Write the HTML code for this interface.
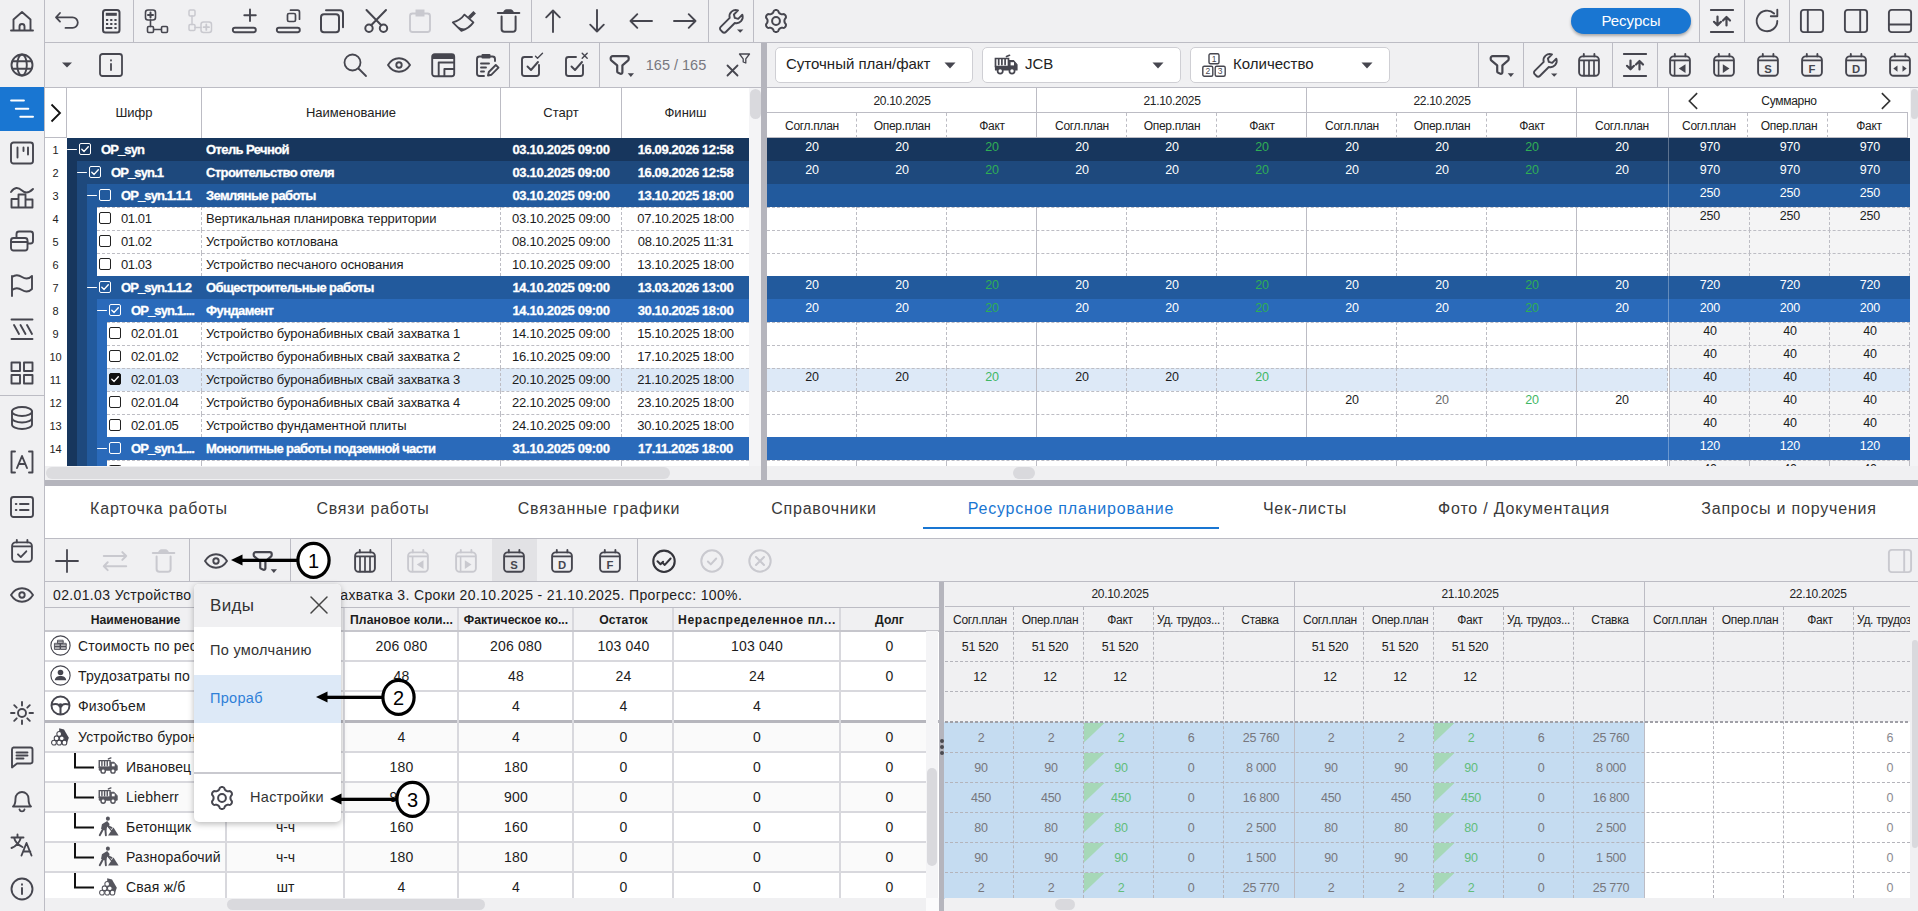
<!DOCTYPE html>
<html lang="ru"><head><meta charset="utf-8"><title>Ресурсное планирование</title>
<style>
*{box-sizing:border-box}
html,body{margin:0;padding:0}
body{width:1918px;height:911px;overflow:hidden;background:#f0f0f2;font-family:"Liberation Sans",sans-serif;position:relative;color:#1c1c1c;font-size:13px}
body div,body svg.ic{position:absolute}
.ic{fill:none;stroke:currentColor;stroke-width:1.9;stroke-linecap:round;stroke-linejoin:round;overflow:visible}
.t{white-space:nowrap;overflow:hidden;text-align:center}
.l{white-space:nowrap;overflow:hidden;text-align:left}
.b{font-weight:bold;color:#fff;letter-spacing:-0.6px;-webkit-text-stroke:0.3px #fff}
.g{color:#2fae55}
</style></head><body>

<div style="left:44px;top:0px;width:1px;height:911px;background:#bcbcc4"></div>
<div style="left:0px;top:87px;width:44px;height:44px;background:#1976d2"></div>
<svg class="ic" style="left:10.0px;top:9.0px;color:#46464f;" width="24" height="24" viewBox="0 0 24 24"><path d="M1 21.5h22M3.5 21V10.5L12 3l8.500 7.5V21M9.500 21.500v-4a2.500 2.500 0 0 1 5 0v4"/></svg>
<svg class="ic" style="left:10.0px;top:53.0px;color:#46464f;" width="24" height="24" viewBox="0 0 24 24"><circle cx="12" cy="12" r="10.500"/><ellipse cx="12" cy="12" rx="4.800" ry="10.500"/><path d="M2.500 8.300h19M2.500 15.700h19"/></svg>
<svg class="ic" style="left:10.0px;top:97.0px;color:#fff;" width="24" height="24" viewBox="0 0 24 24"><path d="M1.100 3.600h12.800M5.800 11.700h12.500M10.300 19.800h12.700" stroke-width="2"/></svg>
<svg class="ic" style="left:10.0px;top:141.0px;color:#46464f;" width="24" height="24" viewBox="0 0 24 24"><rect x="1" y="1.500" width="22" height="21" rx="2.500"/><path d="M7.500 6.500v10M13.500 6.500v3.500M18 6.500v7"/></svg>
<svg class="ic" style="left:10.0px;top:185.0px;color:#46464f;" width="24" height="24" viewBox="0 0 24 24"><path d="M1 7c3.500-5 7-5 11-1.500s7.500 2 11-1.500M1.500 22.500v-8.500h7v8.500M8.500 22.500V9.500h7v13M15.500 22.500v-8h7v8zM1.500 22.500h21"/></svg>
<svg class="ic" style="left:10.0px;top:229.0px;color:#46464f;" width="24" height="24" viewBox="0 0 24 24"><rect x="6.500" y="2.500" width="16.500" height="12" rx="2.500"/><rect x="1" y="9" width="16.500" height="12.500" rx="2.500" fill="#f0f0f2"/><path d="M1 13h16.500"/></svg>
<svg class="ic" style="left:10.0px;top:273.0px;color:#46464f;" width="24" height="24" viewBox="0 0 24 24"><path d="M2 23V3M2 4c4-3 7-2 10 0s6.500 2.500 10-1v13c-3.500 3.500-7 3-10 1s-6-3-10 0"/></svg>
<svg class="ic" style="left:10.0px;top:317.0px;color:#46464f;" width="24" height="24" viewBox="0 0 24 24"><path d="M1.500 2.500h21M1.500 22h21M4 8l5 9M10.500 8l5 9M17 8l5 9"/></svg>
<svg class="ic" style="left:10.0px;top:361.0px;color:#46464f;" width="24" height="24" viewBox="0 0 24 24"><rect x="1.500" y="1.500" width="8.500" height="8.500"/><rect x="14" y="1.500" width="8.500" height="8.500"/><rect x="1.500" y="14" width="8.500" height="8.500"/><rect x="14" y="14" width="8.500" height="8.500"/></svg>
<svg class="ic" style="left:10.0px;top:406.0px;color:#46464f;" width="24" height="24" viewBox="0 0 24 24"><ellipse cx="12" cy="5.500" rx="10" ry="4.500"/><path d="M2 5.500v13c0 2.500 4.500 4.500 10 4.500s10-2 10-4.500v-13M2 12c0 2.500 4.500 4.500 10 4.500s10-2 10-4.500"/></svg>
<svg class="ic" style="left:10.0px;top:450.0px;color:#46464f;" width="24" height="24" viewBox="0 0 24 24"><path d="M5 1.500H1.500v21H5M19 1.500h3.500v21H19M7 18l5-12 5 12M8.800 14h6.400"/></svg>
<svg class="ic" style="left:10.0px;top:495.0px;color:#46464f;" width="24" height="24" viewBox="0 0 24 24"><rect x="1" y="2" width="22" height="20" rx="2.500"/><path d="M10 9h8.500M10 15h8.500M5.800 9h.6M5.800 15h.6" stroke-width="2"/></svg>
<svg class="ic" style="left:10.0px;top:539.0px;color:#46464f;" width="24" height="24" viewBox="0 0 24 24"><rect x="2.100" y="3.400" width="19.800" height="19.400" rx="3.600"/><path d="M6.800 0.900v2.500M17.400 0.900v2.500"/><path d="M2.500 7.400h19" stroke-width="1.800" stroke-linecap="butt"/><path d="M8 15.300l2.800 2.800 5.500-5.800"/></svg>
<svg class="ic" style="left:10.0px;top:583.0px;color:#46464f;" width="24" height="24" viewBox="0 0 24 24"><path d="M1 12c3-4.800 7-6.700 11-6.700s8 1.900 11 6.700c-3 4.800-7 6.700-11 6.700s-8-1.900-11-6.700z"/><circle cx="12" cy="12" r="2.700"/></svg>
<svg class="ic" style="left:10.0px;top:701.0px;color:#46464f;" width="24" height="24" viewBox="0 0 24 24"><circle cx="12" cy="12" r="4"/><path d="M12 1v3.500M12 19.500V23M1 12h3.500M19.500 12H23M4.200 4.200l2.500 2.500M17.300 17.300l2.500 2.500M4.200 19.800l2.500-2.500M17.300 6.700l2.500-2.500"/></svg>
<svg class="ic" style="left:10.0px;top:745.0px;color:#46464f;" width="24" height="24" viewBox="0 0 24 24"><path d="M3.500 2.500h17a2 2 0 0 1 2 2v12a2 2 0 0 1-2 2H7l-5 4v-18a2 2 0 0 1 1.500-2zM6.500 7.500h11M6.500 10.500h11M6.500 13.500h7"/></svg>
<svg class="ic" style="left:10.0px;top:789.0px;color:#46464f;" width="24" height="24" viewBox="0 0 24 24"><path d="M3 17.500c2-1.500 2.500-4 2.500-8a6.500 6.500 0 0 1 13 0c0 4 .5 6.500 2.500 8zM9.500 20.500a2.600 2.600 0 0 0 5 0"/></svg>
<svg class="ic" style="left:10.0px;top:833.0px;color:#46464f;" width="24" height="24" viewBox="0 0 24 24"><path d="M1.500 4.500h12M7.500 1.500v3M11 4.500c-1.500 5-4.500 8.500-9.500 10.500M4 4.500c1 4 4 7.500 8.500 9.500M11.500 22.500l5-12.500 5 12.500M13.300 18.500h7"/></svg>
<svg class="ic" style="left:10.0px;top:877.0px;color:#46464f;" width="24" height="24" viewBox="0 0 24 24"><circle cx="12" cy="12" r="10.500"/><path d="M12 11v6M12 7.300v.4"/></svg>
<div style="left:0px;top:395px;width:44px;height:1px;background:#bcbcc4"></div>
<div style="left:45px;top:42px;width:1873px;height:1px;background:#bcbcc4"></div>
<svg class="ic" style="left:55.0px;top:9.0px;color:#46464f;" width="24" height="24" viewBox="0 0 24 24"><path d="M5 4L1 8.300l4 4.300M1.500 8.300H17.500a5.300 5.300 0 0 1 0 10.600H10.500" stroke-width="1.800"/></svg>
<svg class="ic" style="left:99.0px;top:9.0px;color:#46464f;" width="24" height="24" viewBox="0 0 24 24"><rect x="4" y="1" width="16.500" height="22.500" rx="2.500" stroke-width="2"/><rect x="6.800" y="3.800" width="11" height="3" fill="currentColor" stroke="none"/><path d="M8 11h.2M12.200 11h.2M16.400 11h.2M8 15h.2M12.200 15h.2M16.400 15h.2M7.800 19h4.500M16.400 19h.2" stroke-width="2" stroke-linecap="square"/></svg>
<svg class="ic" style="left:144.0px;top:9.0px;color:#46464f;" width="24" height="24" viewBox="0 0 24 24"><rect x="1.500" y="1" width="10" height="10" rx="2.500" stroke-width="1.600"/><path d="M4 6h5M6.500 3.500v5" stroke-width="2"/><path d="M6.500 11v6.500M9.800 20.500h7.500" stroke-width="1.600"/><rect x="3.500" y="17.500" width="6" height="6" rx="1.200" stroke-width="1.600"/><rect x="17.500" y="17.500" width="6" height="6" rx="1.200" stroke-width="1.600"/></svg>
<svg class="ic" style="left:188.0px;top:9.0px;color:#c9c9cf;" width="24" height="24" viewBox="0 0 24 24"><rect x="1" y="1" width="6" height="6" rx="1.200" stroke-width="1.500"/><path d="M4 7v8.500M7 18.500h6" stroke-width="1.500"/><rect x="1" y="15.500" width="6" height="6" rx="1.200" stroke-width="1.500"/><rect x="13" y="13" width="10.500" height="10.500" rx="2.500" stroke-width="1.500"/><path d="M15.600 18.200h5.400M18.300 15.500v5.400" stroke-width="1.800"/></svg>
<svg class="ic" style="left:232.0px;top:9.0px;color:#46464f;" width="24" height="24" viewBox="0 0 24 24"><rect x="0.800" y="18.800" width="23" height="4.500" rx="2.200" stroke-width="1.900"/><path d="M18 0.500v11.500M12.300 6.200h11.500" stroke-width="1.900"/></svg>
<svg class="ic" style="left:276.0px;top:9.0px;color:#46464f;" width="24" height="24" viewBox="0 0 24 24"><rect x="0.800" y="18.800" width="23" height="4.500" rx="2.200" stroke-width="1.900"/><rect x="11.500" y="4.500" width="8" height="8" rx="1.500" stroke-width="1.700"/><path d="M14.500 1.200h7a2 2 0 0 1 2 2v7" stroke-width="1.700"/></svg>
<svg class="ic" style="left:320.0px;top:9.0px;color:#46464f;" width="24" height="24" viewBox="0 0 24 24"><rect x="1" y="5.300" width="18" height="18" rx="3" stroke-width="2"/><path d="M6 1.300h14a3 3 0 0 1 3 3v14" stroke-width="2"/></svg>
<svg class="ic" style="left:364.0px;top:9.0px;color:#46464f;" width="24" height="24" viewBox="0 0 24 24"><circle cx="5" cy="19.200" r="3.700" stroke-width="2"/><circle cx="19.500" cy="19.200" r="3.700" stroke-width="2"/><path d="M7.200 16.300L22 1M17.300 16.300L2.500 1" stroke-width="2"/></svg>
<svg class="ic" style="left:408.0px;top:9.0px;color:#c9c9cf;" width="24" height="24" viewBox="0 0 24 24"><rect x="2" y="4.500" width="20" height="18.500" rx="2.500"/><rect x="7.500" y="0.500" width="9" height="7" fill="currentColor" stroke="none"/></svg>
<svg class="ic" style="left:452.0px;top:9.0px;color:#46464f;" width="24" height="24" viewBox="0 0 24 24"><path d="M12.500 5.600L21.400 13.400Q17 19.500 9.400 21.800L0.800 13.400Q8.500 11.500 12.500 5.600z" stroke-width="1.800"/><path d="M4.300 16.800L9.400 21.800L13.500 19.800Q8.500 19.500 4.300 16.800z" fill="currentColor" stroke="none"/><path d="M22.700 3.300L17.200 8.700" stroke-width="3.600" stroke-linecap="butt"/></svg>
<svg class="ic" style="left:496.0px;top:9.0px;color:#46464f;" width="24" height="24" viewBox="0 0 24 24"><path d="M1.800 3.900h21.500" stroke-width="2"/><path d="M7 3.800c.5-2.300 2-3.600 3.500-3.600h4c1.500 0 3 1.300 3.500 3.600z" fill="currentColor" stroke="none"/><path d="M5.600 7.500v12.500a2.800 2.800 0 0 0 2.800 2.800h8.400a2.800 2.800 0 0 0 2.800-2.800V7.500" stroke-width="2"/></svg>
<svg class="ic" style="left:541.0px;top:9.0px;color:#46464f;" width="24" height="24" viewBox="0 0 24 24"><path d="M12 23V1.500M5.200 8.300L12 1.500l6.800 6.800" stroke-width="1.900"/></svg>
<svg class="ic" style="left:585.0px;top:9.0px;color:#46464f;" width="24" height="24" viewBox="0 0 24 24"><path d="M12 1v21.500M5.200 15.700l6.800 6.800 6.800-6.800" stroke-width="1.900"/></svg>
<svg class="ic" style="left:629.0px;top:9.0px;color:#46464f;" width="24" height="24" viewBox="0 0 24 24"><path d="M23 12H1.500M8.300 5.200L1.500 12l6.800 6.800" stroke-width="1.900"/></svg>
<svg class="ic" style="left:673.0px;top:9.0px;color:#46464f;" width="24" height="24" viewBox="0 0 24 24"><path d="M1 12h21.500M15.700 5.200l6.800 6.800-6.800 6.800" stroke-width="1.900"/></svg>
<svg class="ic" style="left:719.0px;top:9.0px;color:#46464f;" width="24" height="24" viewBox="0 0 24 24"><path d="M2.200 22a2.300 2.300 0 0 1 0-3.300L11.200 9.700a6.300 6.300 0 0 1 8.300-7.500l-4.100 4.100.9 3.400 3.400.9 4.100-4.100a6.300 6.300 0 0 1-7.500 8.300l-9 9a2.300 2.300 0 0 1-3.300 0z" stroke-width="1.900" transform="translate(-0.500 -0.800)"/><path d="M18 20.500h6.400l-3.200 3.200z" fill="currentColor" stroke="none"/></svg>
<svg class="ic" style="left:764.0px;top:9.0px;color:#46464f;" width="24" height="24" viewBox="0 0 24 24"><path d="M20.40 12.00 L20.44 11.45 L20.55 10.87 L20.76 10.26 L21.37 9.49 L21.91 8.64 L21.95 7.88 L21.82 7.16 L21.53 6.50 L21.10 5.92 L20.55 5.44 L19.87 5.10 L18.86 5.14 L17.89 5.28 L17.25 5.16 L16.70 4.97 L16.20 4.73 L15.74 4.42 L15.30 4.03 L14.87 3.54 L14.51 2.63 L14.04 1.73 L13.41 1.32 L12.72 1.08 L12.00 1.00 L11.28 1.08 L10.59 1.32 L9.96 1.73 L9.49 2.63 L9.13 3.54 L8.70 4.03 L8.26 4.42 L7.80 4.73 L7.30 4.97 L6.75 5.16 L6.11 5.28 L5.14 5.14 L4.13 5.10 L3.45 5.44 L2.90 5.92 L2.47 6.50 L2.18 7.16 L2.05 7.88 L2.09 8.64 L2.63 9.49 L3.24 10.26 L3.45 10.87 L3.56 11.45 L3.60 12.00 L3.56 12.55 L3.45 13.13 L3.24 13.74 L2.63 14.51 L2.09 15.36 L2.05 16.12 L2.18 16.84 L2.47 17.50 L2.90 18.08 L3.45 18.56 L4.13 18.90 L5.14 18.86 L6.11 18.72 L6.75 18.84 L7.30 19.03 L7.80 19.27 L8.26 19.58 L8.70 19.97 L9.13 20.46 L9.49 21.37 L9.96 22.27 L10.59 22.68 L11.28 22.92 L12.00 23.00 L12.72 22.92 L13.41 22.68 L14.04 22.27 L14.51 21.37 L14.87 20.46 L15.30 19.97 L15.74 19.58 L16.20 19.27 L16.70 19.03 L17.25 18.84 L17.89 18.72 L18.86 18.86 L19.87 18.90 L20.55 18.56 L21.10 18.08 L21.53 17.50 L21.82 16.84 L21.95 16.12 L21.91 15.36 L21.37 14.51 L20.76 13.74 L20.55 13.13 L20.44 12.55z" stroke-width="2"/><circle cx="12" cy="12" r="3.900" stroke-width="2"/></svg>
<svg class="ic" style="left:1710.0px;top:9.0px;color:#46464f;" width="24" height="24" viewBox="0 0 24 24"><path d="M0.800 1h22.400M0.800 23h22.400" stroke-width="1.800"/><path d="M7.500 7.500v8.500M4 12.800l3.500 3.500 3.500-3.500M16.500 16.500V8M13 11.500L16.500 8l3.500 3.500" stroke-width="2.200"/></svg>
<svg class="ic" style="left:1755.0px;top:9.0px;color:#46464f;" width="24" height="24" viewBox="0 0 24 24"><path d="M22.300 12a10.300 10.300 0 1 1-3.200-7.500M22.300 0.800v6.500h-6.500" stroke-width="1.900"/></svg>
<svg class="ic" style="left:1800.0px;top:9.0px;color:#46464f;" width="24" height="24" viewBox="0 0 24 24"><rect x="0.900" y="0.900" width="22.200" height="22.200" rx="2.800" stroke-width="1.900"/><path d="M7.800 1v22" stroke-width="1.900"/></svg>
<svg class="ic" style="left:1844.0px;top:9.0px;color:#46464f;" width="24" height="24" viewBox="0 0 24 24"><rect x="0.900" y="0.900" width="22.200" height="22.200" rx="2.800" stroke-width="1.900"/><path d="M16.200 1v22" stroke-width="1.900"/></svg>
<svg class="ic" style="left:1888.0px;top:9.0px;color:#46464f;" width="24" height="24" viewBox="0 0 24 24"><rect x="0.900" y="0.900" width="22.200" height="22.200" rx="2.800" stroke-width="1.900"/><path d="M1 15.500h22" stroke-width="1.900"/></svg>
<div style="left:133px;top:0px;width:1px;height:42px;background:#bcbcc4"></div>
<div style="left:531px;top:0px;width:1px;height:42px;background:#bcbcc4"></div>
<div style="left:708px;top:0px;width:1px;height:42px;background:#bcbcc4"></div>
<div style="left:753px;top:0px;width:1px;height:42px;background:#bcbcc4"></div>
<div style="left:1699px;top:0px;width:1px;height:42px;background:#bcbcc4"></div>
<div style="left:1744px;top:0px;width:1px;height:42px;background:#bcbcc4"></div>
<div style="left:1789px;top:0px;width:1px;height:42px;background:#bcbcc4"></div>
<div style="left:1571px;top:8px;width:120px;height:26px;background:#1976d2;border-radius:13px;box-shadow:0 2px 3px rgba(0,0,0,.3);color:#fff;font-size:15px;text-align:center;line-height:26px">Ресурсы</div>
<div style="left:45px;top:87px;width:1873px;height:1px;background:#bcbcc4"></div>
<svg class="ic" style="left:55.0px;top:53.0px;color:#46464f;" width="24" height="24" viewBox="0 0 24 24"><path d="M7 9.500h10l-5 5z" fill="currentColor" stroke="none"/></svg>
<svg class="ic" style="left:99.0px;top:53.0px;color:#46464f;" width="24" height="24" viewBox="0 0 24 24"><rect x="1" y="1" width="22" height="22" rx="2.500" stroke-width="1.800"/><path d="M12 11v6M12 7.200v.4" stroke-width="1.800"/></svg>
<svg class="ic" style="left:343.0px;top:53.0px;color:#46464f;" width="24" height="24" viewBox="0 0 24 24"><circle cx="9.500" cy="9.500" r="8" stroke-width="1.800"/><path d="M15.500 15.500l7.500 7.500" stroke-width="1.800"/></svg>
<svg class="ic" style="left:387.0px;top:53.0px;color:#46464f;" width="24" height="24" viewBox="0 0 24 24"><path d="M1 12c3-4.800 7-6.700 11-6.700s8 1.900 11 6.700c-3 4.800-7 6.700-11 6.700s-8-1.900-11-6.700z"/><circle cx="12" cy="12" r="2.700"/></svg>
<svg class="ic" style="left:431.0px;top:53.0px;color:#46464f;" width="24" height="24" viewBox="0 0 24 24"><rect x="1.200" y="1.200" width="22" height="22" rx="2.500"/><path d="M1.500 4h21.500" stroke-width="4" stroke-linecap="butt"/><path d="M7.700 23V9.500h15.300M13.400 23v-7h9.600"/></svg>
<svg class="ic" style="left:475.0px;top:53.0px;color:#46464f;" width="24" height="24" viewBox="0 0 24 24"><path d="M20 8V6a2.500 2.500 0 0 0-2.500-2.500h-13A2.500 2.500 0 0 0 2 6v14.500A2.500 2.500 0 0 0 4.500 23H9"/><rect x="6.500" y="1" width="9" height="4.500" rx="1" fill="currentColor" stroke="none"/><path d="M6 10.500h8M6 14.500h5M6 18.500h3M13 22.500l.8-3.500 7-7 2.700 2.700-7 7z"/></svg>
<svg class="ic" style="left:519.0px;top:53.0px;color:#46464f;" width="24" height="24" viewBox="0 0 24 24"><path d="M20 12v8.500a2.500 2.500 0 0 1-2.500 2.500h-12A2.500 2.500 0 0 1 3 20.500v-14A2.500 2.500 0 0 1 5.500 4H13"/><path d="M8.500 13.500l3.500 3.500 7-8"/><path d="M16.500 3.300l2 2 5-5" stroke-width="1.400"/></svg>
<svg class="ic" style="left:563.0px;top:53.0px;color:#46464f;" width="24" height="24" viewBox="0 0 24 24"><path d="M20 12v8.500a2.500 2.500 0 0 1-2.500 2.500h-12A2.500 2.500 0 0 1 3 20.500v-14A2.500 2.500 0 0 1 5.500 4H13"/><path d="M8.500 13.500l3.500 3.500 7-8"/><path d="M19.200 0.300l5 5M24.200 0.300l-5 5" stroke-width="1.400"/></svg>
<svg class="ic" style="left:608.0px;top:53.0px;color:#46464f;" width="24" height="24" viewBox="0 0 24 24"><path d="M4.700 3.100H18.700a2 2 0 0 1 2 2V6a2 2 0 0 1-.8 1.600L14.400 12.300V19.300a1.500 1.500 0 0 1-2 1.400L10.200 19.800a1.500 1.500 0 0 1-1-1.400V12.300L3.500 7.600A2 2 0 0 1 2.700 6V5.100a2 2 0 0 1 2-2z" stroke-width="2.200"/><path d="M19.700 20.300h6.300l-3.150 3.800z" fill="currentColor" stroke="none"/></svg>
<svg class="ic" style="left:726.0px;top:53.0px;color:#46464f;" width="24" height="24" viewBox="0 0 24 24"><path d="M1.500 12.500l10 10M11.500 12.500l-10 10" stroke-width="1.800"/><path d="M13.500 1h10l-3.700 4.800v4.200l-2.600-1v-3.200z" stroke-width="1.300"/></svg>
<svg class="ic" style="left:1488.0px;top:53.0px;color:#46464f;" width="24" height="24" viewBox="0 0 24 24"><path d="M4.700 3.100H18.700a2 2 0 0 1 2 2V6a2 2 0 0 1-.8 1.600L14.400 12.300V19.300a1.500 1.500 0 0 1-2 1.400L10.200 19.800a1.500 1.500 0 0 1-1-1.400V12.300L3.500 7.600A2 2 0 0 1 2.700 6V5.100a2 2 0 0 1 2-2z" stroke-width="2.200"/><path d="M19.700 20.300h6.300l-3.150 3.800z" fill="currentColor" stroke="none"/></svg>
<svg class="ic" style="left:1533.0px;top:53.0px;color:#46464f;" width="24" height="24" viewBox="0 0 24 24"><path d="M2.200 22a2.300 2.300 0 0 1 0-3.300L11.200 9.700a6.300 6.300 0 0 1 8.300-7.500l-4.100 4.100.9 3.400 3.400.9 4.100-4.100a6.300 6.300 0 0 1-7.500 8.300l-9 9a2.300 2.300 0 0 1-3.300 0z" stroke-width="1.900" transform="translate(-0.500 -0.800)"/><path d="M18 20.500h6.400l-3.200 3.200z" fill="currentColor" stroke="none"/></svg>
<svg class="ic" style="left:1577.0px;top:53.0px;color:#46464f;" width="24" height="24" viewBox="0 0 24 24"><rect x="2.100" y="3.400" width="19.800" height="19.400" rx="3.600" stroke-width="1.900"/><path d="M6.800 0.900v2.500M17.400 0.900v2.500" stroke-width="1.900"/><path d="M2.500 7.400h19" stroke-width="1.800" stroke-linecap="butt"/><path d="M7 8v14.500M12 8v14.500M17 8v14.500" stroke-width="1.700"/></svg>
<svg class="ic" style="left:1623.0px;top:53.0px;color:#46464f;" width="24" height="24" viewBox="0 0 24 24"><path d="M0.800 1h22.400M0.800 23h22.400" stroke-width="1.800"/><path d="M7.500 7.500v8.500M4 12.800l3.500 3.500 3.500-3.500M16.500 16.500V8M13 11.500L16.500 8l3.500 3.500" stroke-width="2.200"/></svg>
<svg class="ic" style="left:1668.0px;top:53.0px;color:#46464f;" width="24" height="24" viewBox="0 0 24 24"><rect x="2.100" y="3.400" width="19.800" height="19.400" rx="3.600" stroke-width="1.900"/><path d="M6.800 0.900v2.500M17.400 0.900v2.500" stroke-width="1.900"/><path d="M2.500 7.400h19" stroke-width="1.800" stroke-linecap="butt"/><path d="M6.600 8v14.500" stroke-width="1.600"/><path d="M17.500 11.200v8.800l-6.700-4.400z" fill="currentColor" stroke="none"/></svg>
<svg class="ic" style="left:1712.0px;top:53.0px;color:#46464f;" width="24" height="24" viewBox="0 0 24 24"><rect x="2.100" y="3.400" width="19.800" height="19.400" rx="3.600" stroke-width="1.900"/><path d="M6.800 0.900v2.500M17.400 0.900v2.500" stroke-width="1.900"/><path d="M2.500 7.400h19" stroke-width="1.800" stroke-linecap="butt"/><path d="M6.600 8v14.500" stroke-width="1.600"/><path d="M10.800 11.200v8.800l6.700-4.400z" fill="currentColor" stroke="none"/></svg>
<svg class="ic" style="left:1756.0px;top:53.0px;color:#46464f;" width="24" height="24" viewBox="0 0 24 24"><rect x="2.100" y="3.400" width="19.800" height="19.400" rx="3.600" stroke-width="1.900"/><path d="M6.800 0.900v2.500M17.400 0.900v2.500" stroke-width="1.900"/><path d="M2.500 7.400h19" stroke-width="1.800" stroke-linecap="butt"/><text x="12" y="19.900" text-anchor="middle" font-family="Liberation Sans, sans-serif" font-weight="bold" font-size="11.300" fill="currentColor" stroke="none">S</text></svg>
<svg class="ic" style="left:1800.0px;top:53.0px;color:#46464f;" width="24" height="24" viewBox="0 0 24 24"><rect x="2.100" y="3.400" width="19.800" height="19.400" rx="3.600" stroke-width="1.900"/><path d="M6.800 0.900v2.500M17.400 0.900v2.500" stroke-width="1.900"/><path d="M2.500 7.400h19" stroke-width="1.800" stroke-linecap="butt"/><text x="12" y="19.900" text-anchor="middle" font-family="Liberation Sans, sans-serif" font-weight="bold" font-size="11.300" fill="currentColor" stroke="none">F</text></svg>
<svg class="ic" style="left:1844.0px;top:53.0px;color:#46464f;" width="24" height="24" viewBox="0 0 24 24"><rect x="2.100" y="3.400" width="19.800" height="19.400" rx="3.600" stroke-width="1.900"/><path d="M6.800 0.900v2.500M17.400 0.900v2.500" stroke-width="1.900"/><path d="M2.500 7.400h19" stroke-width="1.800" stroke-linecap="butt"/><text x="12" y="19.900" text-anchor="middle" font-family="Liberation Sans, sans-serif" font-weight="bold" font-size="11.300" fill="currentColor" stroke="none">D</text></svg>
<svg class="ic" style="left:1888.0px;top:53.0px;color:#46464f;" width="24" height="24" viewBox="0 0 24 24"><rect x="2.100" y="3.400" width="19.800" height="19.400" rx="3.600" stroke-width="1.900"/><path d="M6.800 0.900v2.500M17.400 0.900v2.500" stroke-width="1.900"/><path d="M2.500 7.400h19" stroke-width="1.800" stroke-linecap="butt"/><path d="M9.500 12.500v6.200l-4.200-3.100zM14.500 12.500v6.200l4.200-3.100z" fill="currentColor" stroke="none"/></svg>
<div style="left:509px;top:43px;width:1px;height:44px;background:#bcbcc4"></div>
<div style="left:599px;top:43px;width:1px;height:44px;background:#bcbcc4"></div>
<div style="left:1478px;top:43px;width:1px;height:44px;background:#bcbcc4"></div>
<div style="left:1523px;top:43px;width:1px;height:44px;background:#bcbcc4"></div>
<div style="left:1612px;top:43px;width:1px;height:44px;background:#bcbcc4"></div>
<div style="left:1657px;top:43px;width:1px;height:44px;background:#bcbcc4"></div>
<div class="t" style="left:640px;top:54px;width:72px;height:22px;line-height:22px;font-size:14.5px;color:#77777f">165 / 165</div>
<div style="left:775px;top:47px;width:198px;height:36px;background:#fff;border:1px solid #cfcfd4;border-radius:5px"></div>
<div class="l" style="left:786px;top:53px;width:148px;height:22px;line-height:22px;font-size:15px;color:#222">Суточный план/факт</div>
<svg class="ic" style="left:944px;top:61.500px;fill:#46464f;stroke:none" width="12" height="7" viewBox="0 0 12 7"><path d="M0.5 0.5h11L6 6.5z"/></svg>
<div style="left:982px;top:47px;width:199px;height:36px;background:#fff;border:1px solid #cfcfd4;border-radius:5px"></div>
<svg class="ic" style="left:994.0px;top:53.0px;color:#46464f;" width="24" height="24" viewBox="0 0 24 24"><path d="M1.500 5.500h13v8h-13zM4.700 5.500v6M7.900 5.500v6M11.100 5.500v6" stroke-width="1.700" stroke-linejoin="miter"/><path d="M12.500 3.500l3-1.200" stroke-width="1.700"/><path d="M15 7.500h4.300l3.700 4.200v5.300H1.500v-3.500H15z" fill="currentColor" stroke-width="1.200"/><rect x="16.600" y="9.200" width="3.400" height="3.200" fill="#fff" stroke="none"/><circle cx="6.200" cy="18" r="2.600" fill="#fff" stroke-width="1.700"/><circle cx="18" cy="18" r="2.600" fill="#fff" stroke-width="1.700"/></svg>
<div class="l" style="left:1025px;top:53px;width:149px;height:22px;line-height:22px;font-size:15px;color:#222">JCB</div>
<svg class="ic" style="left:1152px;top:61.500px;fill:#46464f;stroke:none" width="12" height="7" viewBox="0 0 12 7"><path d="M0.5 0.5h11L6 6.5z"/></svg>
<div style="left:1190px;top:47px;width:200px;height:36px;background:#fff;border:1px solid #cfcfd4;border-radius:5px"></div>
<svg class="ic" style="left:1202.0px;top:53.0px;color:#46464f;" width="24" height="24" viewBox="0 0 24 24"><rect x="7" y="0.700" width="10" height="10" rx="1.500" stroke-width="1.400"/><rect x="0.800" y="13.200" width="10" height="10" rx="1.500" stroke-width="1.400"/><rect x="13.200" y="13.200" width="10" height="10" rx="1.500" stroke-width="1.400"/><text x="12" y="8.800" text-anchor="middle" font-family="Liberation Sans, sans-serif" font-size="8.500" fill="currentColor" stroke="none">1</text><text x="5.800" y="21.300" text-anchor="middle" font-family="Liberation Sans, sans-serif" font-size="8.500" fill="currentColor" stroke="none">2</text><text x="18.200" y="21.300" text-anchor="middle" font-family="Liberation Sans, sans-serif" font-size="8.500" fill="currentColor" stroke="none">3</text></svg>
<div class="l" style="left:1233px;top:53px;width:150px;height:22px;line-height:22px;font-size:15px;color:#222">Количество</div>
<svg class="ic" style="left:1361px;top:61.500px;fill:#46464f;stroke:none" width="12" height="7" viewBox="0 0 12 7"><path d="M0.5 0.5h11L6 6.5z"/></svg>
<div style="left:761px;top:43px;width:6px;height:437px;background:#b5b5bd"></div>
<div style="left:45px;top:88px;width:716px;height:392px;background:#fff"></div>
<div style="left:66px;top:88px;width:1px;height:50px;background:#bcbcc4"></div>
<div style="left:201px;top:88px;width:1px;height:50px;background:#bcbcc4"></div>
<div style="left:500px;top:88px;width:1px;height:50px;background:#bcbcc4"></div>
<div style="left:621px;top:88px;width:1px;height:50px;background:#bcbcc4"></div>
<svg class="ic" style="left:44.0px;top:101.0px;color:#111;" width="24" height="24" viewBox="0 0 24 24"><path d="M7.500 3.500l8.500 8.500-8.500 8.500" stroke-width="1.800" stroke-linecap="butt" stroke-linejoin="miter"/></svg>
<div style="left:45px;top:137px;width:21px;height:1px;background:#bcbcc4"></div>
<div class="t" style="left:67px;top:101px;width:134px;height:24px;line-height:24px;font-size:13px;color:#222">Шифр</div>
<div class="t" style="left:202px;top:101px;width:298px;height:24px;line-height:24px;font-size:13px;color:#222">Наименование</div>
<div class="t" style="left:501px;top:101px;width:120px;height:24px;line-height:24px;font-size:13px;color:#222">Старт</div>
<div class="t" style="left:622px;top:101px;width:127px;height:24px;line-height:24px;font-size:13px;color:#222">Финиш</div>
<div class="t" style="left:45px;top:139px;width:21px;height:23px;line-height:23px;font-size:11px;color:#222">1</div>
<div style="left:67px;top:138px;width:682px;height:23px;background:#17365d"></div>
<div style="left:67px;top:148.5px;width:10px;height:1.5px;background:#fff;border-radius:1px"></div>
<div style="left:79px;top:143px;width:12px;height:12px;border:1.4px solid #fff;border-radius:2px;"></div>
<svg class="ic" style="left:79px;top:143px;color:#fff;stroke-width:1.4" width="12" height="12" viewBox="0 0 12 12"><path d="M2.8 6.2l2.3 2.2 4.2-4.6"/></svg>
<div class="l b" style="left:101px;top:138px;width:101px;height:23px;line-height:23px;font-size:13px;letter-spacing:-0.9px">OP_syn</div>
<div class="l b" style="left:206px;top:138px;width:294px;height:23px;line-height:23px;font-size:13px">Отель Речной</div>
<div class="t b" style="left:501px;top:138px;width:120px;height:23px;line-height:23px;font-size:13px;letter-spacing:-0.3px">03.10.2025 09:00</div>
<div class="t b" style="left:622px;top:138px;width:127px;height:23px;line-height:23px;font-size:13px;letter-spacing:-0.4px">16.09.2026 12:58</div>
<div class="t" style="left:45px;top:162px;width:21px;height:23px;line-height:23px;font-size:11px;color:#222">2</div>
<div style="left:67px;top:161px;width:10px;height:23px;background:#17365d"></div>
<div style="left:77px;top:161px;width:672px;height:23px;background:#1e497d"></div>
<div style="left:77px;top:171.5px;width:10px;height:1.5px;background:#fff;border-radius:1px"></div>
<div style="left:89px;top:166px;width:12px;height:12px;border:1.4px solid #fff;border-radius:2px;"></div>
<svg class="ic" style="left:89px;top:166px;color:#fff;stroke-width:1.4" width="12" height="12" viewBox="0 0 12 12"><path d="M2.8 6.2l2.3 2.2 4.2-4.6"/></svg>
<div class="l b" style="left:111px;top:161px;width:91px;height:23px;line-height:23px;font-size:13px;letter-spacing:-0.9px">OP_syn.1</div>
<div class="l b" style="left:206px;top:161px;width:294px;height:23px;line-height:23px;font-size:13px">Строительство отеля</div>
<div class="t b" style="left:501px;top:161px;width:120px;height:23px;line-height:23px;font-size:13px;letter-spacing:-0.3px">03.10.2025 09:00</div>
<div class="t b" style="left:622px;top:161px;width:127px;height:23px;line-height:23px;font-size:13px;letter-spacing:-0.4px">16.09.2026 12:58</div>
<div class="t" style="left:45px;top:185px;width:21px;height:23px;line-height:23px;font-size:11px;color:#222">3</div>
<div style="left:67px;top:184px;width:10px;height:23px;background:#17365d"></div>
<div style="left:77px;top:184px;width:10px;height:23px;background:#1e497d"></div>
<div style="left:87px;top:184px;width:662px;height:23px;background:#225a9d"></div>
<div style="left:87px;top:194.5px;width:10px;height:1.5px;background:#fff;border-radius:1px"></div>
<div style="left:99px;top:189px;width:12px;height:12px;border:1.4px solid #fff;border-radius:2px;"></div>
<div class="l b" style="left:121px;top:184px;width:81px;height:23px;line-height:23px;font-size:13px;letter-spacing:-0.9px">OP_syn.1.1.1</div>
<div class="l b" style="left:206px;top:184px;width:294px;height:23px;line-height:23px;font-size:13px">Земляные работы</div>
<div class="t b" style="left:501px;top:184px;width:120px;height:23px;line-height:23px;font-size:13px;letter-spacing:-0.3px">03.10.2025 09:00</div>
<div class="t b" style="left:622px;top:184px;width:127px;height:23px;line-height:23px;font-size:13px;letter-spacing:-0.4px">13.10.2025 18:00</div>
<div class="t" style="left:45px;top:208px;width:21px;height:23px;line-height:23px;font-size:11px;color:#222">4</div>
<div style="left:67px;top:207px;width:10px;height:23px;background:#17365d"></div>
<div style="left:77px;top:207px;width:10px;height:23px;background:#1e497d"></div>
<div style="left:87px;top:207px;width:10px;height:23px;background:#225a9d"></div>
<div style="left:97px;top:207px;width:652px;height:23px;background:#fff;border-top:1px dashed #bdbdc4"></div>
<div style="left:201px;top:207px;width:1px;height:23px;border-left:1px dashed #bdbdc4"></div>
<div style="left:500px;top:207px;width:1px;height:23px;border-left:1px dashed #bdbdc4"></div>
<div style="left:621px;top:207px;width:1px;height:23px;border-left:1px dashed #bdbdc4"></div>
<div style="left:99px;top:212px;width:12px;height:12px;border:1.4px solid #222;border-radius:2px;"></div>
<div class="l" style="left:121px;top:207px;width:80px;height:23px;line-height:23px;font-size:13px;color:#1c1c1c;letter-spacing:-0.4px">01.01</div>
<div class="l" style="left:206px;top:207px;width:294px;height:23px;line-height:23px;font-size:13px;color:#1c1c1c;letter-spacing:-0.07px">Вертикальная планировка территории</div>
<div class="t" style="left:501px;top:207px;width:120px;height:23px;line-height:23px;font-size:13px;color:#1c1c1c;letter-spacing:-0.2px">03.10.2025 09:00</div>
<div class="t" style="left:622px;top:207px;width:127px;height:23px;line-height:23px;font-size:13px;color:#1c1c1c;letter-spacing:-0.3px">07.10.2025 18:00</div>
<div class="t" style="left:45px;top:231px;width:21px;height:23px;line-height:23px;font-size:11px;color:#222">5</div>
<div style="left:67px;top:230px;width:10px;height:23px;background:#17365d"></div>
<div style="left:77px;top:230px;width:10px;height:23px;background:#1e497d"></div>
<div style="left:87px;top:230px;width:10px;height:23px;background:#225a9d"></div>
<div style="left:97px;top:230px;width:652px;height:23px;background:#fff;border-top:1px dashed #bdbdc4"></div>
<div style="left:201px;top:230px;width:1px;height:23px;border-left:1px dashed #bdbdc4"></div>
<div style="left:500px;top:230px;width:1px;height:23px;border-left:1px dashed #bdbdc4"></div>
<div style="left:621px;top:230px;width:1px;height:23px;border-left:1px dashed #bdbdc4"></div>
<div style="left:99px;top:235px;width:12px;height:12px;border:1.4px solid #222;border-radius:2px;"></div>
<div class="l" style="left:121px;top:230px;width:80px;height:23px;line-height:23px;font-size:13px;color:#1c1c1c;letter-spacing:-0.4px">01.02</div>
<div class="l" style="left:206px;top:230px;width:294px;height:23px;line-height:23px;font-size:13px;color:#1c1c1c;letter-spacing:-0.07px">Устройство котлована</div>
<div class="t" style="left:501px;top:230px;width:120px;height:23px;line-height:23px;font-size:13px;color:#1c1c1c;letter-spacing:-0.2px">08.10.2025 09:00</div>
<div class="t" style="left:622px;top:230px;width:127px;height:23px;line-height:23px;font-size:13px;color:#1c1c1c;letter-spacing:-0.3px">08.10.2025 11:31</div>
<div class="t" style="left:45px;top:254px;width:21px;height:23px;line-height:23px;font-size:11px;color:#222">6</div>
<div style="left:67px;top:253px;width:10px;height:23px;background:#17365d"></div>
<div style="left:77px;top:253px;width:10px;height:23px;background:#1e497d"></div>
<div style="left:87px;top:253px;width:10px;height:23px;background:#225a9d"></div>
<div style="left:97px;top:253px;width:652px;height:23px;background:#fff;border-top:1px dashed #bdbdc4"></div>
<div style="left:201px;top:253px;width:1px;height:23px;border-left:1px dashed #bdbdc4"></div>
<div style="left:500px;top:253px;width:1px;height:23px;border-left:1px dashed #bdbdc4"></div>
<div style="left:621px;top:253px;width:1px;height:23px;border-left:1px dashed #bdbdc4"></div>
<div style="left:99px;top:258px;width:12px;height:12px;border:1.4px solid #222;border-radius:2px;"></div>
<div class="l" style="left:121px;top:253px;width:80px;height:23px;line-height:23px;font-size:13px;color:#1c1c1c;letter-spacing:-0.4px">01.03</div>
<div class="l" style="left:206px;top:253px;width:294px;height:23px;line-height:23px;font-size:13px;color:#1c1c1c;letter-spacing:-0.07px">Устройство песчаного основания</div>
<div class="t" style="left:501px;top:253px;width:120px;height:23px;line-height:23px;font-size:13px;color:#1c1c1c;letter-spacing:-0.2px">10.10.2025 09:00</div>
<div class="t" style="left:622px;top:253px;width:127px;height:23px;line-height:23px;font-size:13px;color:#1c1c1c;letter-spacing:-0.3px">13.10.2025 18:00</div>
<div class="t" style="left:45px;top:277px;width:21px;height:23px;line-height:23px;font-size:11px;color:#222">7</div>
<div style="left:67px;top:276px;width:10px;height:23px;background:#17365d"></div>
<div style="left:77px;top:276px;width:10px;height:23px;background:#1e497d"></div>
<div style="left:87px;top:276px;width:662px;height:23px;background:#225a9d"></div>
<div style="left:87px;top:286.5px;width:10px;height:1.5px;background:#fff;border-radius:1px"></div>
<div style="left:99px;top:281px;width:12px;height:12px;border:1.4px solid #fff;border-radius:2px;"></div>
<svg class="ic" style="left:99px;top:281px;color:#fff;stroke-width:1.4" width="12" height="12" viewBox="0 0 12 12"><path d="M2.8 6.2l2.3 2.2 4.2-4.6"/></svg>
<div class="l b" style="left:121px;top:276px;width:81px;height:23px;line-height:23px;font-size:13px;letter-spacing:-0.9px">OP_syn.1.1.2</div>
<div class="l b" style="left:206px;top:276px;width:294px;height:23px;line-height:23px;font-size:13px">Общестроительные работы</div>
<div class="t b" style="left:501px;top:276px;width:120px;height:23px;line-height:23px;font-size:13px;letter-spacing:-0.3px">14.10.2025 09:00</div>
<div class="t b" style="left:622px;top:276px;width:127px;height:23px;line-height:23px;font-size:13px;letter-spacing:-0.4px">13.03.2026 13:00</div>
<div class="t" style="left:45px;top:300px;width:21px;height:23px;line-height:23px;font-size:11px;color:#222">8</div>
<div style="left:67px;top:299px;width:10px;height:23px;background:#17365d"></div>
<div style="left:77px;top:299px;width:10px;height:23px;background:#1e497d"></div>
<div style="left:87px;top:299px;width:10px;height:23px;background:#225a9d"></div>
<div style="left:97px;top:299px;width:652px;height:23px;background:#2a6aba"></div>
<div style="left:97px;top:309.5px;width:10px;height:1.5px;background:#fff;border-radius:1px"></div>
<div style="left:109px;top:304px;width:12px;height:12px;border:1.4px solid #fff;border-radius:2px;"></div>
<svg class="ic" style="left:109px;top:304px;color:#fff;stroke-width:1.4" width="12" height="12" viewBox="0 0 12 12"><path d="M2.8 6.2l2.3 2.2 4.2-4.6"/></svg>
<div class="l b" style="left:131px;top:299px;width:71px;height:23px;line-height:23px;font-size:13px;letter-spacing:-0.9px">OP_syn.1....</div>
<div class="l b" style="left:206px;top:299px;width:294px;height:23px;line-height:23px;font-size:13px">Фундамент</div>
<div class="t b" style="left:501px;top:299px;width:120px;height:23px;line-height:23px;font-size:13px;letter-spacing:-0.3px">14.10.2025 09:00</div>
<div class="t b" style="left:622px;top:299px;width:127px;height:23px;line-height:23px;font-size:13px;letter-spacing:-0.4px">30.10.2025 18:00</div>
<div class="t" style="left:45px;top:323px;width:21px;height:23px;line-height:23px;font-size:11px;color:#222">9</div>
<div style="left:67px;top:322px;width:10px;height:23px;background:#17365d"></div>
<div style="left:77px;top:322px;width:10px;height:23px;background:#1e497d"></div>
<div style="left:87px;top:322px;width:10px;height:23px;background:#225a9d"></div>
<div style="left:97px;top:322px;width:10px;height:23px;background:#2a6aba"></div>
<div style="left:107px;top:322px;width:642px;height:23px;background:#fff;border-top:1px dashed #bdbdc4"></div>
<div style="left:201px;top:322px;width:1px;height:23px;border-left:1px dashed #bdbdc4"></div>
<div style="left:500px;top:322px;width:1px;height:23px;border-left:1px dashed #bdbdc4"></div>
<div style="left:621px;top:322px;width:1px;height:23px;border-left:1px dashed #bdbdc4"></div>
<div style="left:109px;top:327px;width:12px;height:12px;border:1.4px solid #222;border-radius:2px;"></div>
<div class="l" style="left:131px;top:322px;width:70px;height:23px;line-height:23px;font-size:13px;color:#1c1c1c;letter-spacing:-0.4px">02.01.01</div>
<div class="l" style="left:206px;top:322px;width:294px;height:23px;line-height:23px;font-size:13px;color:#1c1c1c;letter-spacing:-0.07px">Устройство буронабивных свай захватка 1</div>
<div class="t" style="left:501px;top:322px;width:120px;height:23px;line-height:23px;font-size:13px;color:#1c1c1c;letter-spacing:-0.2px">14.10.2025 09:00</div>
<div class="t" style="left:622px;top:322px;width:127px;height:23px;line-height:23px;font-size:13px;color:#1c1c1c;letter-spacing:-0.3px">15.10.2025 18:00</div>
<div class="t" style="left:45px;top:346px;width:21px;height:23px;line-height:23px;font-size:11px;color:#222">10</div>
<div style="left:67px;top:345px;width:10px;height:23px;background:#17365d"></div>
<div style="left:77px;top:345px;width:10px;height:23px;background:#1e497d"></div>
<div style="left:87px;top:345px;width:10px;height:23px;background:#225a9d"></div>
<div style="left:97px;top:345px;width:10px;height:23px;background:#2a6aba"></div>
<div style="left:107px;top:345px;width:642px;height:23px;background:#fff;border-top:1px dashed #bdbdc4"></div>
<div style="left:201px;top:345px;width:1px;height:23px;border-left:1px dashed #bdbdc4"></div>
<div style="left:500px;top:345px;width:1px;height:23px;border-left:1px dashed #bdbdc4"></div>
<div style="left:621px;top:345px;width:1px;height:23px;border-left:1px dashed #bdbdc4"></div>
<div style="left:109px;top:350px;width:12px;height:12px;border:1.4px solid #222;border-radius:2px;"></div>
<div class="l" style="left:131px;top:345px;width:70px;height:23px;line-height:23px;font-size:13px;color:#1c1c1c;letter-spacing:-0.4px">02.01.02</div>
<div class="l" style="left:206px;top:345px;width:294px;height:23px;line-height:23px;font-size:13px;color:#1c1c1c;letter-spacing:-0.07px">Устройство буронабивных свай захватка 2</div>
<div class="t" style="left:501px;top:345px;width:120px;height:23px;line-height:23px;font-size:13px;color:#1c1c1c;letter-spacing:-0.2px">16.10.2025 09:00</div>
<div class="t" style="left:622px;top:345px;width:127px;height:23px;line-height:23px;font-size:13px;color:#1c1c1c;letter-spacing:-0.3px">17.10.2025 18:00</div>
<div class="t" style="left:45px;top:369px;width:21px;height:23px;line-height:23px;font-size:11px;color:#222">11</div>
<div style="left:67px;top:368px;width:10px;height:23px;background:#17365d"></div>
<div style="left:77px;top:368px;width:10px;height:23px;background:#1e497d"></div>
<div style="left:87px;top:368px;width:10px;height:23px;background:#225a9d"></div>
<div style="left:97px;top:368px;width:10px;height:23px;background:#2a6aba"></div>
<div style="left:107px;top:368px;width:642px;height:23px;background:#dde9f7;border-top:1px dashed #bdbdc4"></div>
<div style="left:201px;top:368px;width:1px;height:23px;border-left:1px dashed #bdbdc4"></div>
<div style="left:500px;top:368px;width:1px;height:23px;border-left:1px dashed #bdbdc4"></div>
<div style="left:621px;top:368px;width:1px;height:23px;border-left:1px dashed #bdbdc4"></div>
<div style="left:109px;top:373px;width:12px;height:12px;border:1.4px solid #111;border-radius:2px;background:#111;"></div>
<svg class="ic" style="left:109px;top:373px;color:#fff;stroke-width:1.4" width="12" height="12" viewBox="0 0 12 12"><path d="M2.8 6.2l2.3 2.2 4.2-4.6"/></svg>
<div class="l" style="left:131px;top:368px;width:70px;height:23px;line-height:23px;font-size:13px;color:#1c1c1c;letter-spacing:-0.4px">02.01.03</div>
<div class="l" style="left:206px;top:368px;width:294px;height:23px;line-height:23px;font-size:13px;color:#1c1c1c;letter-spacing:-0.07px">Устройство буронабивных свай захватка 3</div>
<div class="t" style="left:501px;top:368px;width:120px;height:23px;line-height:23px;font-size:13px;color:#1c1c1c;letter-spacing:-0.2px">20.10.2025 09:00</div>
<div class="t" style="left:622px;top:368px;width:127px;height:23px;line-height:23px;font-size:13px;color:#1c1c1c;letter-spacing:-0.3px">21.10.2025 18:00</div>
<div class="t" style="left:45px;top:392px;width:21px;height:23px;line-height:23px;font-size:11px;color:#222">12</div>
<div style="left:67px;top:391px;width:10px;height:23px;background:#17365d"></div>
<div style="left:77px;top:391px;width:10px;height:23px;background:#1e497d"></div>
<div style="left:87px;top:391px;width:10px;height:23px;background:#225a9d"></div>
<div style="left:97px;top:391px;width:10px;height:23px;background:#2a6aba"></div>
<div style="left:107px;top:391px;width:642px;height:23px;background:#fff;border-top:1px dashed #bdbdc4"></div>
<div style="left:201px;top:391px;width:1px;height:23px;border-left:1px dashed #bdbdc4"></div>
<div style="left:500px;top:391px;width:1px;height:23px;border-left:1px dashed #bdbdc4"></div>
<div style="left:621px;top:391px;width:1px;height:23px;border-left:1px dashed #bdbdc4"></div>
<div style="left:109px;top:396px;width:12px;height:12px;border:1.4px solid #222;border-radius:2px;"></div>
<div class="l" style="left:131px;top:391px;width:70px;height:23px;line-height:23px;font-size:13px;color:#1c1c1c;letter-spacing:-0.4px">02.01.04</div>
<div class="l" style="left:206px;top:391px;width:294px;height:23px;line-height:23px;font-size:13px;color:#1c1c1c;letter-spacing:-0.07px">Устройство буронабивных свай захватка 4</div>
<div class="t" style="left:501px;top:391px;width:120px;height:23px;line-height:23px;font-size:13px;color:#1c1c1c;letter-spacing:-0.2px">22.10.2025 09:00</div>
<div class="t" style="left:622px;top:391px;width:127px;height:23px;line-height:23px;font-size:13px;color:#1c1c1c;letter-spacing:-0.3px">23.10.2025 18:00</div>
<div class="t" style="left:45px;top:415px;width:21px;height:23px;line-height:23px;font-size:11px;color:#222">13</div>
<div style="left:67px;top:414px;width:10px;height:23px;background:#17365d"></div>
<div style="left:77px;top:414px;width:10px;height:23px;background:#1e497d"></div>
<div style="left:87px;top:414px;width:10px;height:23px;background:#225a9d"></div>
<div style="left:97px;top:414px;width:10px;height:23px;background:#2a6aba"></div>
<div style="left:107px;top:414px;width:642px;height:23px;background:#fff;border-top:1px dashed #bdbdc4"></div>
<div style="left:201px;top:414px;width:1px;height:23px;border-left:1px dashed #bdbdc4"></div>
<div style="left:500px;top:414px;width:1px;height:23px;border-left:1px dashed #bdbdc4"></div>
<div style="left:621px;top:414px;width:1px;height:23px;border-left:1px dashed #bdbdc4"></div>
<div style="left:109px;top:419px;width:12px;height:12px;border:1.4px solid #222;border-radius:2px;"></div>
<div class="l" style="left:131px;top:414px;width:70px;height:23px;line-height:23px;font-size:13px;color:#1c1c1c;letter-spacing:-0.4px">02.01.05</div>
<div class="l" style="left:206px;top:414px;width:294px;height:23px;line-height:23px;font-size:13px;color:#1c1c1c;letter-spacing:-0.07px">Устройство фундаментной плиты</div>
<div class="t" style="left:501px;top:414px;width:120px;height:23px;line-height:23px;font-size:13px;color:#1c1c1c;letter-spacing:-0.2px">24.10.2025 09:00</div>
<div class="t" style="left:622px;top:414px;width:127px;height:23px;line-height:23px;font-size:13px;color:#1c1c1c;letter-spacing:-0.3px">30.10.2025 18:00</div>
<div class="t" style="left:45px;top:438px;width:21px;height:23px;line-height:23px;font-size:11px;color:#222">14</div>
<div style="left:67px;top:437px;width:10px;height:23px;background:#17365d"></div>
<div style="left:77px;top:437px;width:10px;height:23px;background:#1e497d"></div>
<div style="left:87px;top:437px;width:10px;height:23px;background:#225a9d"></div>
<div style="left:97px;top:437px;width:652px;height:23px;background:#2a6aba"></div>
<div style="left:97px;top:447.5px;width:10px;height:1.5px;background:#fff;border-radius:1px"></div>
<div style="left:109px;top:442px;width:12px;height:12px;border:1.4px solid #fff;border-radius:2px;"></div>
<div class="l b" style="left:131px;top:437px;width:71px;height:23px;line-height:23px;font-size:13px;letter-spacing:-0.9px">OP_syn.1....</div>
<div class="l b" style="left:206px;top:437px;width:294px;height:23px;line-height:23px;font-size:13px">Монолитные работы подземной части</div>
<div class="t b" style="left:501px;top:437px;width:120px;height:23px;line-height:23px;font-size:13px;letter-spacing:-0.3px">31.10.2025 09:00</div>
<div class="t b" style="left:622px;top:437px;width:127px;height:23px;line-height:23px;font-size:13px;letter-spacing:-0.4px">17.11.2025 18:00</div>
<div style="left:67px;top:460px;width:10px;height:6px;background:#17365d"></div>
<div style="left:77px;top:460px;width:10px;height:6px;background:#1e497d"></div>
<div style="left:87px;top:460px;width:10px;height:6px;background:#225a9d"></div>
<div style="left:97px;top:460px;width:10px;height:6px;background:#2a6aba"></div>
<div style="left:107px;top:460px;width:642px;height:6px;background:#fff;border-top:1px dashed #bdbdc4"></div>
<div style="left:109px;top:465px;width:12px;height:3px;border:1.4px solid #222;border-bottom:none;border-radius:2px 2px 0 0"></div>
<div style="left:201px;top:460px;width:1px;height:6px;border-left:1px dashed #bdbdc4"></div>
<div style="left:500px;top:460px;width:1px;height:6px;border-left:1px dashed #bdbdc4"></div>
<div style="left:621px;top:460px;width:1px;height:6px;border-left:1px dashed #bdbdc4"></div>
<div style="left:749px;top:88px;width:12px;height:379px;background:#f4f4f6"></div>
<div style="left:749.5px;top:89px;width:11px;height:30px;background:#d9d9dd;border-radius:5.5px"></div>
<div style="left:45px;top:466px;width:716px;height:14px;background:#f0f0f2"></div>
<div style="left:46px;top:467px;width:624px;height:12px;background:#dcdcdf;border-radius:6px"></div>
<div style="left:767px;top:88px;width:1151px;height:392px;background:#fff"></div>
<div style="left:767px;top:112px;width:1141px;height:1px;background:#bcbcc4"></div>
<div style="left:767px;top:137px;width:1141px;height:1px;background:#bcbcc4"></div>
<div class="t" style="left:767px;top:90px;width:270px;height:22px;line-height:22px;font-size:12px;letter-spacing:-0.3px;color:#222">20.10.2025</div>
<div class="t" style="left:767px;top:115px;width:90px;height:22px;line-height:22px;font-size:12px;letter-spacing:-0.3px;color:#222">Согл.план</div>
<div class="t" style="left:857px;top:115px;width:90px;height:22px;line-height:22px;font-size:12px;letter-spacing:-0.3px;color:#222">Опер.план</div>
<div class="t" style="left:947px;top:115px;width:90px;height:22px;line-height:22px;font-size:12px;letter-spacing:-0.3px;color:#222">Факт</div>
<div class="t" style="left:1037px;top:90px;width:270px;height:22px;line-height:22px;font-size:12px;letter-spacing:-0.3px;color:#222">21.10.2025</div>
<div class="t" style="left:1037px;top:115px;width:90px;height:22px;line-height:22px;font-size:12px;letter-spacing:-0.3px;color:#222">Согл.план</div>
<div class="t" style="left:1127px;top:115px;width:90px;height:22px;line-height:22px;font-size:12px;letter-spacing:-0.3px;color:#222">Опер.план</div>
<div class="t" style="left:1217px;top:115px;width:90px;height:22px;line-height:22px;font-size:12px;letter-spacing:-0.3px;color:#222">Факт</div>
<div class="t" style="left:1307px;top:90px;width:270px;height:22px;line-height:22px;font-size:12px;letter-spacing:-0.3px;color:#222">22.10.2025</div>
<div class="t" style="left:1307px;top:115px;width:90px;height:22px;line-height:22px;font-size:12px;letter-spacing:-0.3px;color:#222">Согл.план</div>
<div class="t" style="left:1397px;top:115px;width:90px;height:22px;line-height:22px;font-size:12px;letter-spacing:-0.3px;color:#222">Опер.план</div>
<div class="t" style="left:1487px;top:115px;width:90px;height:22px;line-height:22px;font-size:12px;letter-spacing:-0.3px;color:#222">Факт</div>
<div class="t" style="left:1577px;top:115px;width:90px;height:22px;line-height:22px;font-size:12px;letter-spacing:-0.3px;color:#222">Согл.план</div>
<div class="t" style="left:1669px;top:90px;width:240px;height:22px;line-height:22px;font-size:12px;letter-spacing:-0.3px;color:#222">Суммарно</div>
<div class="t" style="left:1669px;top:115px;width:80px;height:22px;line-height:22px;font-size:12px;letter-spacing:-0.3px;color:#222">Согл.план</div>
<div class="t" style="left:1749px;top:115px;width:80px;height:22px;line-height:22px;font-size:12px;letter-spacing:-0.3px;color:#222">Опер.план</div>
<div class="t" style="left:1829px;top:115px;width:80px;height:22px;line-height:22px;font-size:12px;letter-spacing:-0.3px;color:#222">Факт</div>
<svg class="ic" style="left:1682.0px;top:90.0px;color:#333;" width="22" height="22" viewBox="0 0 24 24"><path d="M16.500 3.500L8 12l8.500 8.500" stroke-width="1.800" stroke-linecap="butt" stroke-linejoin="miter"/></svg>
<svg class="ic" style="left:1875.0px;top:90.0px;color:#333;" width="22" height="22" viewBox="0 0 24 24"><path d="M7.500 3.500l8.500 8.500-8.500 8.500" stroke-width="1.800" stroke-linecap="butt" stroke-linejoin="miter"/></svg>
<div style="left:1036px;top:88px;width:1px;height:50px;background:#bcbcc4"></div>
<div style="left:1306px;top:88px;width:1px;height:50px;background:#bcbcc4"></div>
<div style="left:1576px;top:88px;width:1px;height:50px;background:#bcbcc4"></div>
<div style="left:1668px;top:88px;width:1px;height:50px;background:#bcbcc4"></div>
<div style="left:856px;top:113px;width:1px;height:25px;border-left:1px dashed #bdbdc4"></div>
<div style="left:946px;top:113px;width:1px;height:25px;border-left:1px dashed #bdbdc4"></div>
<div style="left:1126px;top:113px;width:1px;height:25px;border-left:1px dashed #bdbdc4"></div>
<div style="left:1216px;top:113px;width:1px;height:25px;border-left:1px dashed #bdbdc4"></div>
<div style="left:1396px;top:113px;width:1px;height:25px;border-left:1px dashed #bdbdc4"></div>
<div style="left:1486px;top:113px;width:1px;height:25px;border-left:1px dashed #bdbdc4"></div>
<div style="left:1747px;top:113px;width:1px;height:25px;border-left:1px dashed #bdbdc4"></div>
<div style="left:1827px;top:113px;width:1px;height:25px;border-left:1px dashed #bdbdc4"></div>
<div style="left:1907px;top:113px;width:1px;height:25px;background:#bcbcc4"></div>
<div style="left:767px;top:138px;width:1143px;height:23px;background:#17365d"></div>
<div style="left:1668px;top:138px;width:1px;height:23px;background:rgba(255,255,255,.3)"></div>
<div class="t" style="left:767px;top:136px;width:90px;height:23px;line-height:23px;font-size:12.5px;letter-spacing:-0.2px;color:#fff">20</div>
<div class="t" style="left:857px;top:136px;width:90px;height:23px;line-height:23px;font-size:12.5px;letter-spacing:-0.2px;color:#fff">20</div>
<div class="t" style="left:947px;top:136px;width:90px;height:23px;line-height:23px;font-size:12.5px;letter-spacing:-0.2px;color:#2fae55">20</div>
<div class="t" style="left:1037px;top:136px;width:90px;height:23px;line-height:23px;font-size:12.5px;letter-spacing:-0.2px;color:#fff">20</div>
<div class="t" style="left:1127px;top:136px;width:90px;height:23px;line-height:23px;font-size:12.5px;letter-spacing:-0.2px;color:#fff">20</div>
<div class="t" style="left:1217px;top:136px;width:90px;height:23px;line-height:23px;font-size:12.5px;letter-spacing:-0.2px;color:#2fae55">20</div>
<div class="t" style="left:1307px;top:136px;width:90px;height:23px;line-height:23px;font-size:12.5px;letter-spacing:-0.2px;color:#fff">20</div>
<div class="t" style="left:1397px;top:136px;width:90px;height:23px;line-height:23px;font-size:12.5px;letter-spacing:-0.2px;color:#fff">20</div>
<div class="t" style="left:1487px;top:136px;width:90px;height:23px;line-height:23px;font-size:12.5px;letter-spacing:-0.2px;color:#2fae55">20</div>
<div class="t" style="left:1577px;top:136px;width:90px;height:23px;line-height:23px;font-size:12.5px;letter-spacing:-0.2px;color:#fff">20</div>
<div class="t" style="left:1670px;top:136px;width:80px;height:23px;line-height:23px;font-size:12.5px;letter-spacing:-0.2px;color:#fff">970</div>
<div class="t" style="left:1750px;top:136px;width:80px;height:23px;line-height:23px;font-size:12.5px;letter-spacing:-0.2px;color:#fff">970</div>
<div class="t" style="left:1830px;top:136px;width:80px;height:23px;line-height:23px;font-size:12.5px;letter-spacing:-0.2px;color:#fff">970</div>
<div style="left:767px;top:161px;width:1143px;height:23px;background:#1e497d"></div>
<div style="left:1668px;top:161px;width:1px;height:23px;background:rgba(255,255,255,.3)"></div>
<div class="t" style="left:767px;top:159px;width:90px;height:23px;line-height:23px;font-size:12.5px;letter-spacing:-0.2px;color:#fff">20</div>
<div class="t" style="left:857px;top:159px;width:90px;height:23px;line-height:23px;font-size:12.5px;letter-spacing:-0.2px;color:#fff">20</div>
<div class="t" style="left:947px;top:159px;width:90px;height:23px;line-height:23px;font-size:12.5px;letter-spacing:-0.2px;color:#2fae55">20</div>
<div class="t" style="left:1037px;top:159px;width:90px;height:23px;line-height:23px;font-size:12.5px;letter-spacing:-0.2px;color:#fff">20</div>
<div class="t" style="left:1127px;top:159px;width:90px;height:23px;line-height:23px;font-size:12.5px;letter-spacing:-0.2px;color:#fff">20</div>
<div class="t" style="left:1217px;top:159px;width:90px;height:23px;line-height:23px;font-size:12.5px;letter-spacing:-0.2px;color:#2fae55">20</div>
<div class="t" style="left:1307px;top:159px;width:90px;height:23px;line-height:23px;font-size:12.5px;letter-spacing:-0.2px;color:#fff">20</div>
<div class="t" style="left:1397px;top:159px;width:90px;height:23px;line-height:23px;font-size:12.5px;letter-spacing:-0.2px;color:#fff">20</div>
<div class="t" style="left:1487px;top:159px;width:90px;height:23px;line-height:23px;font-size:12.5px;letter-spacing:-0.2px;color:#2fae55">20</div>
<div class="t" style="left:1577px;top:159px;width:90px;height:23px;line-height:23px;font-size:12.5px;letter-spacing:-0.2px;color:#fff">20</div>
<div class="t" style="left:1670px;top:159px;width:80px;height:23px;line-height:23px;font-size:12.5px;letter-spacing:-0.2px;color:#fff">970</div>
<div class="t" style="left:1750px;top:159px;width:80px;height:23px;line-height:23px;font-size:12.5px;letter-spacing:-0.2px;color:#fff">970</div>
<div class="t" style="left:1830px;top:159px;width:80px;height:23px;line-height:23px;font-size:12.5px;letter-spacing:-0.2px;color:#fff">970</div>
<div style="left:767px;top:184px;width:1143px;height:23px;background:#225a9d"></div>
<div style="left:1668px;top:184px;width:1px;height:23px;background:rgba(255,255,255,.3)"></div>
<div class="t" style="left:1670px;top:182px;width:80px;height:23px;line-height:23px;font-size:12.5px;letter-spacing:-0.2px;color:#fff">250</div>
<div class="t" style="left:1750px;top:182px;width:80px;height:23px;line-height:23px;font-size:12.5px;letter-spacing:-0.2px;color:#fff">250</div>
<div class="t" style="left:1830px;top:182px;width:80px;height:23px;line-height:23px;font-size:12.5px;letter-spacing:-0.2px;color:#fff">250</div>
<div style="left:767px;top:207px;width:901px;height:23px;background:#fff;border-top:1px dashed #bdbdc4"></div>
<div style="left:1669px;top:207px;width:241px;height:23px;background:#f4f4f5;border-top:1px dashed #bdbdc4"></div>
<div style="left:1036px;top:207px;width:1px;height:23px;background:#bcbcc4"></div>
<div style="left:1306px;top:207px;width:1px;height:23px;background:#bcbcc4"></div>
<div style="left:1576px;top:207px;width:1px;height:23px;background:#bcbcc4"></div>
<div style="left:856px;top:207px;width:1px;height:23px;border-left:1px dashed #bdbdc4"></div>
<div style="left:946px;top:207px;width:1px;height:23px;border-left:1px dashed #bdbdc4"></div>
<div style="left:1126px;top:207px;width:1px;height:23px;border-left:1px dashed #bdbdc4"></div>
<div style="left:1216px;top:207px;width:1px;height:23px;border-left:1px dashed #bdbdc4"></div>
<div style="left:1396px;top:207px;width:1px;height:23px;border-left:1px dashed #bdbdc4"></div>
<div style="left:1486px;top:207px;width:1px;height:23px;border-left:1px dashed #bdbdc4"></div>
<div style="left:1749px;top:207px;width:1px;height:23px;border-left:1px dashed #bdbdc4"></div>
<div style="left:1829px;top:207px;width:1px;height:23px;border-left:1px dashed #bdbdc4"></div>
<div style="left:1909px;top:207px;width:1px;height:23px;border-left:1px dashed #bdbdc4"></div>
<div style="left:1667px;top:207px;width:1px;height:23px;border-left:1px dashed #bdbdc4"></div>
<div style="left:1669px;top:207px;width:1px;height:23px;background:#bcbcc4"></div>
<div class="t" style="left:1670px;top:205px;width:80px;height:23px;line-height:23px;font-size:12.5px;letter-spacing:-0.2px;color:#1c1c1c">250</div>
<div class="t" style="left:1750px;top:205px;width:80px;height:23px;line-height:23px;font-size:12.5px;letter-spacing:-0.2px;color:#1c1c1c">250</div>
<div class="t" style="left:1830px;top:205px;width:80px;height:23px;line-height:23px;font-size:12.5px;letter-spacing:-0.2px;color:#1c1c1c">250</div>
<div style="left:767px;top:230px;width:901px;height:23px;background:#fff;border-top:1px dashed #bdbdc4"></div>
<div style="left:1669px;top:230px;width:241px;height:23px;background:#f4f4f5;border-top:1px dashed #bdbdc4"></div>
<div style="left:1036px;top:230px;width:1px;height:23px;background:#bcbcc4"></div>
<div style="left:1306px;top:230px;width:1px;height:23px;background:#bcbcc4"></div>
<div style="left:1576px;top:230px;width:1px;height:23px;background:#bcbcc4"></div>
<div style="left:856px;top:230px;width:1px;height:23px;border-left:1px dashed #bdbdc4"></div>
<div style="left:946px;top:230px;width:1px;height:23px;border-left:1px dashed #bdbdc4"></div>
<div style="left:1126px;top:230px;width:1px;height:23px;border-left:1px dashed #bdbdc4"></div>
<div style="left:1216px;top:230px;width:1px;height:23px;border-left:1px dashed #bdbdc4"></div>
<div style="left:1396px;top:230px;width:1px;height:23px;border-left:1px dashed #bdbdc4"></div>
<div style="left:1486px;top:230px;width:1px;height:23px;border-left:1px dashed #bdbdc4"></div>
<div style="left:1749px;top:230px;width:1px;height:23px;border-left:1px dashed #bdbdc4"></div>
<div style="left:1829px;top:230px;width:1px;height:23px;border-left:1px dashed #bdbdc4"></div>
<div style="left:1909px;top:230px;width:1px;height:23px;border-left:1px dashed #bdbdc4"></div>
<div style="left:1667px;top:230px;width:1px;height:23px;border-left:1px dashed #bdbdc4"></div>
<div style="left:1669px;top:230px;width:1px;height:23px;background:#bcbcc4"></div>
<div style="left:767px;top:253px;width:901px;height:23px;background:#fff;border-top:1px dashed #bdbdc4"></div>
<div style="left:1669px;top:253px;width:241px;height:23px;background:#f4f4f5;border-top:1px dashed #bdbdc4"></div>
<div style="left:1036px;top:253px;width:1px;height:23px;background:#bcbcc4"></div>
<div style="left:1306px;top:253px;width:1px;height:23px;background:#bcbcc4"></div>
<div style="left:1576px;top:253px;width:1px;height:23px;background:#bcbcc4"></div>
<div style="left:856px;top:253px;width:1px;height:23px;border-left:1px dashed #bdbdc4"></div>
<div style="left:946px;top:253px;width:1px;height:23px;border-left:1px dashed #bdbdc4"></div>
<div style="left:1126px;top:253px;width:1px;height:23px;border-left:1px dashed #bdbdc4"></div>
<div style="left:1216px;top:253px;width:1px;height:23px;border-left:1px dashed #bdbdc4"></div>
<div style="left:1396px;top:253px;width:1px;height:23px;border-left:1px dashed #bdbdc4"></div>
<div style="left:1486px;top:253px;width:1px;height:23px;border-left:1px dashed #bdbdc4"></div>
<div style="left:1749px;top:253px;width:1px;height:23px;border-left:1px dashed #bdbdc4"></div>
<div style="left:1829px;top:253px;width:1px;height:23px;border-left:1px dashed #bdbdc4"></div>
<div style="left:1909px;top:253px;width:1px;height:23px;border-left:1px dashed #bdbdc4"></div>
<div style="left:1667px;top:253px;width:1px;height:23px;border-left:1px dashed #bdbdc4"></div>
<div style="left:1669px;top:253px;width:1px;height:23px;background:#bcbcc4"></div>
<div style="left:767px;top:276px;width:1143px;height:23px;background:#225a9d"></div>
<div style="left:1668px;top:276px;width:1px;height:23px;background:rgba(255,255,255,.3)"></div>
<div class="t" style="left:767px;top:274px;width:90px;height:23px;line-height:23px;font-size:12.5px;letter-spacing:-0.2px;color:#fff">20</div>
<div class="t" style="left:857px;top:274px;width:90px;height:23px;line-height:23px;font-size:12.5px;letter-spacing:-0.2px;color:#fff">20</div>
<div class="t" style="left:947px;top:274px;width:90px;height:23px;line-height:23px;font-size:12.5px;letter-spacing:-0.2px;color:#2fae55">20</div>
<div class="t" style="left:1037px;top:274px;width:90px;height:23px;line-height:23px;font-size:12.5px;letter-spacing:-0.2px;color:#fff">20</div>
<div class="t" style="left:1127px;top:274px;width:90px;height:23px;line-height:23px;font-size:12.5px;letter-spacing:-0.2px;color:#fff">20</div>
<div class="t" style="left:1217px;top:274px;width:90px;height:23px;line-height:23px;font-size:12.5px;letter-spacing:-0.2px;color:#2fae55">20</div>
<div class="t" style="left:1307px;top:274px;width:90px;height:23px;line-height:23px;font-size:12.5px;letter-spacing:-0.2px;color:#fff">20</div>
<div class="t" style="left:1397px;top:274px;width:90px;height:23px;line-height:23px;font-size:12.5px;letter-spacing:-0.2px;color:#fff">20</div>
<div class="t" style="left:1487px;top:274px;width:90px;height:23px;line-height:23px;font-size:12.5px;letter-spacing:-0.2px;color:#2fae55">20</div>
<div class="t" style="left:1577px;top:274px;width:90px;height:23px;line-height:23px;font-size:12.5px;letter-spacing:-0.2px;color:#fff">20</div>
<div class="t" style="left:1670px;top:274px;width:80px;height:23px;line-height:23px;font-size:12.5px;letter-spacing:-0.2px;color:#fff">720</div>
<div class="t" style="left:1750px;top:274px;width:80px;height:23px;line-height:23px;font-size:12.5px;letter-spacing:-0.2px;color:#fff">720</div>
<div class="t" style="left:1830px;top:274px;width:80px;height:23px;line-height:23px;font-size:12.5px;letter-spacing:-0.2px;color:#fff">720</div>
<div style="left:767px;top:299px;width:1143px;height:23px;background:#2a6aba"></div>
<div style="left:1668px;top:299px;width:1px;height:23px;background:rgba(255,255,255,.3)"></div>
<div class="t" style="left:767px;top:297px;width:90px;height:23px;line-height:23px;font-size:12.5px;letter-spacing:-0.2px;color:#fff">20</div>
<div class="t" style="left:857px;top:297px;width:90px;height:23px;line-height:23px;font-size:12.5px;letter-spacing:-0.2px;color:#fff">20</div>
<div class="t" style="left:947px;top:297px;width:90px;height:23px;line-height:23px;font-size:12.5px;letter-spacing:-0.2px;color:#2fae55">20</div>
<div class="t" style="left:1037px;top:297px;width:90px;height:23px;line-height:23px;font-size:12.5px;letter-spacing:-0.2px;color:#fff">20</div>
<div class="t" style="left:1127px;top:297px;width:90px;height:23px;line-height:23px;font-size:12.5px;letter-spacing:-0.2px;color:#fff">20</div>
<div class="t" style="left:1217px;top:297px;width:90px;height:23px;line-height:23px;font-size:12.5px;letter-spacing:-0.2px;color:#2fae55">20</div>
<div class="t" style="left:1307px;top:297px;width:90px;height:23px;line-height:23px;font-size:12.5px;letter-spacing:-0.2px;color:#fff">20</div>
<div class="t" style="left:1397px;top:297px;width:90px;height:23px;line-height:23px;font-size:12.5px;letter-spacing:-0.2px;color:#fff">20</div>
<div class="t" style="left:1487px;top:297px;width:90px;height:23px;line-height:23px;font-size:12.5px;letter-spacing:-0.2px;color:#2fae55">20</div>
<div class="t" style="left:1577px;top:297px;width:90px;height:23px;line-height:23px;font-size:12.5px;letter-spacing:-0.2px;color:#fff">20</div>
<div class="t" style="left:1670px;top:297px;width:80px;height:23px;line-height:23px;font-size:12.5px;letter-spacing:-0.2px;color:#fff">200</div>
<div class="t" style="left:1750px;top:297px;width:80px;height:23px;line-height:23px;font-size:12.5px;letter-spacing:-0.2px;color:#fff">200</div>
<div class="t" style="left:1830px;top:297px;width:80px;height:23px;line-height:23px;font-size:12.5px;letter-spacing:-0.2px;color:#fff">200</div>
<div style="left:767px;top:322px;width:901px;height:23px;background:#fff;border-top:1px dashed #bdbdc4"></div>
<div style="left:1669px;top:322px;width:241px;height:23px;background:#f4f4f5;border-top:1px dashed #bdbdc4"></div>
<div style="left:1036px;top:322px;width:1px;height:23px;background:#bcbcc4"></div>
<div style="left:1306px;top:322px;width:1px;height:23px;background:#bcbcc4"></div>
<div style="left:1576px;top:322px;width:1px;height:23px;background:#bcbcc4"></div>
<div style="left:856px;top:322px;width:1px;height:23px;border-left:1px dashed #bdbdc4"></div>
<div style="left:946px;top:322px;width:1px;height:23px;border-left:1px dashed #bdbdc4"></div>
<div style="left:1126px;top:322px;width:1px;height:23px;border-left:1px dashed #bdbdc4"></div>
<div style="left:1216px;top:322px;width:1px;height:23px;border-left:1px dashed #bdbdc4"></div>
<div style="left:1396px;top:322px;width:1px;height:23px;border-left:1px dashed #bdbdc4"></div>
<div style="left:1486px;top:322px;width:1px;height:23px;border-left:1px dashed #bdbdc4"></div>
<div style="left:1749px;top:322px;width:1px;height:23px;border-left:1px dashed #bdbdc4"></div>
<div style="left:1829px;top:322px;width:1px;height:23px;border-left:1px dashed #bdbdc4"></div>
<div style="left:1909px;top:322px;width:1px;height:23px;border-left:1px dashed #bdbdc4"></div>
<div style="left:1667px;top:322px;width:1px;height:23px;border-left:1px dashed #bdbdc4"></div>
<div style="left:1669px;top:322px;width:1px;height:23px;background:#bcbcc4"></div>
<div class="t" style="left:1670px;top:320px;width:80px;height:23px;line-height:23px;font-size:12.5px;letter-spacing:-0.2px;color:#1c1c1c">40</div>
<div class="t" style="left:1750px;top:320px;width:80px;height:23px;line-height:23px;font-size:12.5px;letter-spacing:-0.2px;color:#1c1c1c">40</div>
<div class="t" style="left:1830px;top:320px;width:80px;height:23px;line-height:23px;font-size:12.5px;letter-spacing:-0.2px;color:#1c1c1c">40</div>
<div style="left:767px;top:345px;width:901px;height:23px;background:#fff;border-top:1px dashed #bdbdc4"></div>
<div style="left:1669px;top:345px;width:241px;height:23px;background:#f4f4f5;border-top:1px dashed #bdbdc4"></div>
<div style="left:1036px;top:345px;width:1px;height:23px;background:#bcbcc4"></div>
<div style="left:1306px;top:345px;width:1px;height:23px;background:#bcbcc4"></div>
<div style="left:1576px;top:345px;width:1px;height:23px;background:#bcbcc4"></div>
<div style="left:856px;top:345px;width:1px;height:23px;border-left:1px dashed #bdbdc4"></div>
<div style="left:946px;top:345px;width:1px;height:23px;border-left:1px dashed #bdbdc4"></div>
<div style="left:1126px;top:345px;width:1px;height:23px;border-left:1px dashed #bdbdc4"></div>
<div style="left:1216px;top:345px;width:1px;height:23px;border-left:1px dashed #bdbdc4"></div>
<div style="left:1396px;top:345px;width:1px;height:23px;border-left:1px dashed #bdbdc4"></div>
<div style="left:1486px;top:345px;width:1px;height:23px;border-left:1px dashed #bdbdc4"></div>
<div style="left:1749px;top:345px;width:1px;height:23px;border-left:1px dashed #bdbdc4"></div>
<div style="left:1829px;top:345px;width:1px;height:23px;border-left:1px dashed #bdbdc4"></div>
<div style="left:1909px;top:345px;width:1px;height:23px;border-left:1px dashed #bdbdc4"></div>
<div style="left:1667px;top:345px;width:1px;height:23px;border-left:1px dashed #bdbdc4"></div>
<div style="left:1669px;top:345px;width:1px;height:23px;background:#bcbcc4"></div>
<div class="t" style="left:1670px;top:343px;width:80px;height:23px;line-height:23px;font-size:12.5px;letter-spacing:-0.2px;color:#1c1c1c">40</div>
<div class="t" style="left:1750px;top:343px;width:80px;height:23px;line-height:23px;font-size:12.5px;letter-spacing:-0.2px;color:#1c1c1c">40</div>
<div class="t" style="left:1830px;top:343px;width:80px;height:23px;line-height:23px;font-size:12.5px;letter-spacing:-0.2px;color:#1c1c1c">40</div>
<div style="left:767px;top:368px;width:901px;height:23px;background:#dde9f7;border-top:1px dashed #bdbdc4"></div>
<div style="left:1669px;top:368px;width:241px;height:23px;background:#dde9f7;border-top:1px dashed #bdbdc4"></div>
<div style="left:1036px;top:368px;width:1px;height:23px;background:#bcbcc4"></div>
<div style="left:1306px;top:368px;width:1px;height:23px;background:#bcbcc4"></div>
<div style="left:1576px;top:368px;width:1px;height:23px;background:#bcbcc4"></div>
<div style="left:856px;top:368px;width:1px;height:23px;border-left:1px dashed #bdbdc4"></div>
<div style="left:946px;top:368px;width:1px;height:23px;border-left:1px dashed #bdbdc4"></div>
<div style="left:1126px;top:368px;width:1px;height:23px;border-left:1px dashed #bdbdc4"></div>
<div style="left:1216px;top:368px;width:1px;height:23px;border-left:1px dashed #bdbdc4"></div>
<div style="left:1396px;top:368px;width:1px;height:23px;border-left:1px dashed #bdbdc4"></div>
<div style="left:1486px;top:368px;width:1px;height:23px;border-left:1px dashed #bdbdc4"></div>
<div style="left:1749px;top:368px;width:1px;height:23px;border-left:1px dashed #bdbdc4"></div>
<div style="left:1829px;top:368px;width:1px;height:23px;border-left:1px dashed #bdbdc4"></div>
<div style="left:1909px;top:368px;width:1px;height:23px;border-left:1px dashed #bdbdc4"></div>
<div style="left:1667px;top:368px;width:1px;height:23px;border-left:1px dashed #bdbdc4"></div>
<div style="left:1669px;top:368px;width:1px;height:23px;background:#bcbcc4"></div>
<div class="t" style="left:767px;top:366px;width:90px;height:23px;line-height:23px;font-size:12.5px;letter-spacing:-0.2px;color:#1c1c1c">20</div>
<div class="t" style="left:857px;top:366px;width:90px;height:23px;line-height:23px;font-size:12.5px;letter-spacing:-0.2px;color:#1c1c1c">20</div>
<div class="t" style="left:947px;top:366px;width:90px;height:23px;line-height:23px;font-size:12.5px;letter-spacing:-0.2px;color:#3fb765">20</div>
<div class="t" style="left:1037px;top:366px;width:90px;height:23px;line-height:23px;font-size:12.5px;letter-spacing:-0.2px;color:#1c1c1c">20</div>
<div class="t" style="left:1127px;top:366px;width:90px;height:23px;line-height:23px;font-size:12.5px;letter-spacing:-0.2px;color:#1c1c1c">20</div>
<div class="t" style="left:1217px;top:366px;width:90px;height:23px;line-height:23px;font-size:12.5px;letter-spacing:-0.2px;color:#3fb765">20</div>
<div class="t" style="left:1670px;top:366px;width:80px;height:23px;line-height:23px;font-size:12.5px;letter-spacing:-0.2px;color:#1c1c1c">40</div>
<div class="t" style="left:1750px;top:366px;width:80px;height:23px;line-height:23px;font-size:12.5px;letter-spacing:-0.2px;color:#1c1c1c">40</div>
<div class="t" style="left:1830px;top:366px;width:80px;height:23px;line-height:23px;font-size:12.5px;letter-spacing:-0.2px;color:#1c1c1c">40</div>
<div style="left:767px;top:391px;width:901px;height:23px;background:#fff;border-top:1px dashed #bdbdc4"></div>
<div style="left:1669px;top:391px;width:241px;height:23px;background:#f4f4f5;border-top:1px dashed #bdbdc4"></div>
<div style="left:1036px;top:391px;width:1px;height:23px;background:#bcbcc4"></div>
<div style="left:1306px;top:391px;width:1px;height:23px;background:#bcbcc4"></div>
<div style="left:1576px;top:391px;width:1px;height:23px;background:#bcbcc4"></div>
<div style="left:856px;top:391px;width:1px;height:23px;border-left:1px dashed #bdbdc4"></div>
<div style="left:946px;top:391px;width:1px;height:23px;border-left:1px dashed #bdbdc4"></div>
<div style="left:1126px;top:391px;width:1px;height:23px;border-left:1px dashed #bdbdc4"></div>
<div style="left:1216px;top:391px;width:1px;height:23px;border-left:1px dashed #bdbdc4"></div>
<div style="left:1396px;top:391px;width:1px;height:23px;border-left:1px dashed #bdbdc4"></div>
<div style="left:1486px;top:391px;width:1px;height:23px;border-left:1px dashed #bdbdc4"></div>
<div style="left:1749px;top:391px;width:1px;height:23px;border-left:1px dashed #bdbdc4"></div>
<div style="left:1829px;top:391px;width:1px;height:23px;border-left:1px dashed #bdbdc4"></div>
<div style="left:1909px;top:391px;width:1px;height:23px;border-left:1px dashed #bdbdc4"></div>
<div style="left:1667px;top:391px;width:1px;height:23px;border-left:1px dashed #bdbdc4"></div>
<div style="left:1669px;top:391px;width:1px;height:23px;background:#bcbcc4"></div>
<div class="t" style="left:1307px;top:389px;width:90px;height:23px;line-height:23px;font-size:12.5px;letter-spacing:-0.2px;color:#1c1c1c">20</div>
<div class="t" style="left:1397px;top:389px;width:90px;height:23px;line-height:23px;font-size:12.5px;letter-spacing:-0.2px;color:#6a6a6a">20</div>
<div class="t" style="left:1487px;top:389px;width:90px;height:23px;line-height:23px;font-size:12.5px;letter-spacing:-0.2px;color:#3fb765">20</div>
<div class="t" style="left:1577px;top:389px;width:90px;height:23px;line-height:23px;font-size:12.5px;letter-spacing:-0.2px;color:#1c1c1c">20</div>
<div class="t" style="left:1670px;top:389px;width:80px;height:23px;line-height:23px;font-size:12.5px;letter-spacing:-0.2px;color:#1c1c1c">40</div>
<div class="t" style="left:1750px;top:389px;width:80px;height:23px;line-height:23px;font-size:12.5px;letter-spacing:-0.2px;color:#1c1c1c">40</div>
<div class="t" style="left:1830px;top:389px;width:80px;height:23px;line-height:23px;font-size:12.5px;letter-spacing:-0.2px;color:#1c1c1c">40</div>
<div style="left:767px;top:414px;width:901px;height:23px;background:#fff;border-top:1px dashed #bdbdc4"></div>
<div style="left:1669px;top:414px;width:241px;height:23px;background:#f4f4f5;border-top:1px dashed #bdbdc4"></div>
<div style="left:1036px;top:414px;width:1px;height:23px;background:#bcbcc4"></div>
<div style="left:1306px;top:414px;width:1px;height:23px;background:#bcbcc4"></div>
<div style="left:1576px;top:414px;width:1px;height:23px;background:#bcbcc4"></div>
<div style="left:856px;top:414px;width:1px;height:23px;border-left:1px dashed #bdbdc4"></div>
<div style="left:946px;top:414px;width:1px;height:23px;border-left:1px dashed #bdbdc4"></div>
<div style="left:1126px;top:414px;width:1px;height:23px;border-left:1px dashed #bdbdc4"></div>
<div style="left:1216px;top:414px;width:1px;height:23px;border-left:1px dashed #bdbdc4"></div>
<div style="left:1396px;top:414px;width:1px;height:23px;border-left:1px dashed #bdbdc4"></div>
<div style="left:1486px;top:414px;width:1px;height:23px;border-left:1px dashed #bdbdc4"></div>
<div style="left:1749px;top:414px;width:1px;height:23px;border-left:1px dashed #bdbdc4"></div>
<div style="left:1829px;top:414px;width:1px;height:23px;border-left:1px dashed #bdbdc4"></div>
<div style="left:1909px;top:414px;width:1px;height:23px;border-left:1px dashed #bdbdc4"></div>
<div style="left:1667px;top:414px;width:1px;height:23px;border-left:1px dashed #bdbdc4"></div>
<div style="left:1669px;top:414px;width:1px;height:23px;background:#bcbcc4"></div>
<div class="t" style="left:1670px;top:412px;width:80px;height:23px;line-height:23px;font-size:12.5px;letter-spacing:-0.2px;color:#1c1c1c">40</div>
<div class="t" style="left:1750px;top:412px;width:80px;height:23px;line-height:23px;font-size:12.5px;letter-spacing:-0.2px;color:#1c1c1c">40</div>
<div class="t" style="left:1830px;top:412px;width:80px;height:23px;line-height:23px;font-size:12.5px;letter-spacing:-0.2px;color:#1c1c1c">40</div>
<div style="left:767px;top:437px;width:1143px;height:23px;background:#2a6aba"></div>
<div style="left:1668px;top:437px;width:1px;height:23px;background:rgba(255,255,255,.3)"></div>
<div class="t" style="left:1670px;top:435px;width:80px;height:23px;line-height:23px;font-size:12.5px;letter-spacing:-0.2px;color:#fff">120</div>
<div class="t" style="left:1750px;top:435px;width:80px;height:23px;line-height:23px;font-size:12.5px;letter-spacing:-0.2px;color:#fff">120</div>
<div class="t" style="left:1830px;top:435px;width:80px;height:23px;line-height:23px;font-size:12.5px;letter-spacing:-0.2px;color:#fff">120</div>
<div style="left:767px;top:460px;width:901px;height:6px;background:#fff;border-top:1px dashed #bdbdc4"></div>
<div style="left:1669px;top:460px;width:241px;height:6px;background:#f4f4f5;border-top:1px dashed #bdbdc4"></div>
<div style="left:1036px;top:460px;width:1px;height:6px;background:#bcbcc4"></div>
<div style="left:1306px;top:460px;width:1px;height:6px;background:#bcbcc4"></div>
<div style="left:1576px;top:460px;width:1px;height:6px;background:#bcbcc4"></div>
<div style="left:856px;top:460px;width:1px;height:6px;border-left:1px dashed #bdbdc4"></div>
<div style="left:946px;top:460px;width:1px;height:6px;border-left:1px dashed #bdbdc4"></div>
<div style="left:1126px;top:460px;width:1px;height:6px;border-left:1px dashed #bdbdc4"></div>
<div style="left:1216px;top:460px;width:1px;height:6px;border-left:1px dashed #bdbdc4"></div>
<div style="left:1396px;top:460px;width:1px;height:6px;border-left:1px dashed #bdbdc4"></div>
<div style="left:1486px;top:460px;width:1px;height:6px;border-left:1px dashed #bdbdc4"></div>
<div style="left:1749px;top:460px;width:1px;height:6px;border-left:1px dashed #bdbdc4"></div>
<div style="left:1829px;top:460px;width:1px;height:6px;border-left:1px dashed #bdbdc4"></div>
<div style="left:1909px;top:460px;width:1px;height:6px;border-left:1px dashed #bdbdc4"></div>
<div style="left:1667px;top:460px;width:1px;height:6px;border-left:1px dashed #bdbdc4"></div>
<div style="left:1669px;top:460px;width:1px;height:6px;background:#bcbcc4"></div>
<div class="t" style="left:1670px;top:458px;width:80px;height:23px;line-height:23px;font-size:12.5px;letter-spacing:-0.2px;color:#1c1c1c">40</div>
<div class="t" style="left:1750px;top:458px;width:80px;height:23px;line-height:23px;font-size:12.5px;letter-spacing:-0.2px;color:#1c1c1c">40</div>
<div class="t" style="left:1830px;top:458px;width:80px;height:23px;line-height:23px;font-size:12.5px;letter-spacing:-0.2px;color:#1c1c1c">40</div>
<div style="left:1910px;top:88px;width:8px;height:379px;background:#f4f4f6"></div>
<div style="left:1911px;top:89px;width:7px;height:30px;background:#d9d9dd;border-radius:4px"></div>
<div style="left:767px;top:466px;width:1151px;height:14px;background:#f0f0f2"></div>
<div style="left:1013px;top:467px;width:22px;height:12px;background:#d9d9dd;border-radius:6px"></div>
<div style="left:45px;top:480px;width:1873px;height:6px;background:#b5b5bd"></div>
<div style="left:45px;top:486px;width:1873px;height:52px;background:#fff"></div>
<div style="left:45px;top:538px;width:1873px;height:1px;background:#bcbcc4"></div>
<div class="t" style="left:9px;top:497px;width:300px;height:24px;line-height:24px;font-size:16px;letter-spacing:0.8px;color:#3a3a3a">Карточка работы</div>
<div class="t" style="left:223px;top:497px;width:300px;height:24px;line-height:24px;font-size:16px;letter-spacing:0.8px;color:#3a3a3a">Связи работы</div>
<div class="t" style="left:449px;top:497px;width:300px;height:24px;line-height:24px;font-size:16px;letter-spacing:0.8px;color:#3a3a3a">Связанные графики</div>
<div class="t" style="left:674px;top:497px;width:300px;height:24px;line-height:24px;font-size:16px;letter-spacing:0.8px;color:#3a3a3a">Справочники</div>
<div class="t" style="left:921px;top:497px;width:300px;height:24px;line-height:24px;font-size:16px;letter-spacing:0.8px;color:#1976d2">Ресурсное планирование</div>
<div class="t" style="left:1155px;top:497px;width:300px;height:24px;line-height:24px;font-size:16px;letter-spacing:0.8px;color:#3a3a3a">Чек-листы</div>
<div class="t" style="left:1374px;top:497px;width:300px;height:24px;line-height:24px;font-size:16px;letter-spacing:0.8px;color:#3a3a3a">Фото / Документация</div>
<div class="t" style="left:1639px;top:497px;width:300px;height:24px;line-height:24px;font-size:16px;letter-spacing:0.8px;color:#3a3a3a">Запросы и поручения</div>
<div style="left:923px;top:527px;width:296px;height:2px;background:#1976d2"></div>
<div style="left:45px;top:581px;width:1873px;height:1px;background:#bcbcc4"></div>
<div style="left:492px;top:539px;width:45px;height:42px;background:#e2e2e5"></div>
<svg class="ic" style="left:55.0px;top:548.6px;color:#46464f;" width="24" height="24" viewBox="0 0 24 24"><path d="M12 1v22M1 12h22" stroke-width="1.800"/></svg>
<svg class="ic" style="left:103.0px;top:548.6px;color:#c9c9cf;" width="24" height="24" viewBox="0 0 24 24"><path d="M0.800 7h22.400M19.300 3.100l3.900 3.900-3.900 3.900M23.200 17.200H0.800M4.700 13.300l-3.900 3.900 3.900 3.900" stroke-width="2"/></svg>
<svg class="ic" style="left:151.0px;top:548.6px;color:#c9c9cf;" width="24" height="24" viewBox="0 0 24 24"><path d="M1.800 3.900h21.500" stroke-width="2"/><path d="M7 3.800c.5-2.300 2-3.600 3.500-3.600h4c1.500 0 3 1.300 3.500 3.600z" fill="currentColor" stroke="none"/><path d="M5.600 7.500v12.500a2.800 2.800 0 0 0 2.800 2.800h8.400a2.800 2.800 0 0 0 2.800-2.800V7.500" stroke-width="2"/></svg>
<svg class="ic" style="left:204.0px;top:548.6px;color:#46464f;" width="24" height="24" viewBox="0 0 24 24"><path d="M1 12c3-4.800 7-6.700 11-6.700s8 1.900 11 6.700c-3 4.800-7 6.700-11 6.700s-8-1.900-11-6.700z"/><circle cx="12" cy="12" r="2.700"/></svg>
<svg class="ic" style="left:250.5px;top:548.6px;color:#46464f;" width="24" height="24" viewBox="0 0 24 24"><path d="M4.700 3.100H18.700a2 2 0 0 1 2 2V6a2 2 0 0 1-.8 1.600L14.400 12.300V19.300a1.500 1.500 0 0 1-2 1.400L10.200 19.800a1.500 1.500 0 0 1-1-1.400V12.300L3.500 7.600A2 2 0 0 1 2.700 6V5.100a2 2 0 0 1 2-2z" stroke-width="2.200"/><path d="M19.700 20.300h6.300l-3.150 3.800z" fill="currentColor" stroke="none"/></svg>
<svg class="ic" style="left:353.0px;top:548.6px;color:#46464f;" width="24" height="24" viewBox="0 0 24 24"><rect x="2.100" y="3.400" width="19.800" height="19.400" rx="3.600" stroke-width="1.900"/><path d="M6.800 0.900v2.500M17.400 0.900v2.500" stroke-width="1.900"/><path d="M2.500 7.400h19" stroke-width="1.800" stroke-linecap="butt"/><path d="M7 8v14.500M12 8v14.500M17 8v14.500" stroke-width="1.700"/></svg>
<svg class="ic" style="left:406.0px;top:548.6px;color:#c9c9cf;" width="24" height="24" viewBox="0 0 24 24"><rect x="2.100" y="3.400" width="19.800" height="19.400" rx="3.600" stroke-width="1.900"/><path d="M6.800 0.900v2.500M17.400 0.900v2.500" stroke-width="1.900"/><path d="M2.500 7.400h19" stroke-width="1.800" stroke-linecap="butt"/><path d="M6.600 8v14.500" stroke-width="1.600"/><path d="M17.500 11.200v8.800l-6.700-4.400z" fill="currentColor" stroke="none"/></svg>
<svg class="ic" style="left:454.0px;top:548.6px;color:#c9c9cf;" width="24" height="24" viewBox="0 0 24 24"><rect x="2.100" y="3.400" width="19.800" height="19.400" rx="3.600" stroke-width="1.900"/><path d="M6.800 0.900v2.500M17.400 0.900v2.500" stroke-width="1.900"/><path d="M2.500 7.400h19" stroke-width="1.800" stroke-linecap="butt"/><path d="M6.600 8v14.500" stroke-width="1.600"/><path d="M10.800 11.200v8.800l6.700-4.400z" fill="currentColor" stroke="none"/></svg>
<svg class="ic" style="left:502.0px;top:548.6px;color:#46464f;" width="24" height="24" viewBox="0 0 24 24"><rect x="2.100" y="3.400" width="19.800" height="19.400" rx="3.600" stroke-width="1.900"/><path d="M6.800 0.900v2.500M17.400 0.900v2.500" stroke-width="1.900"/><path d="M2.500 7.400h19" stroke-width="1.800" stroke-linecap="butt"/><text x="12" y="19.900" text-anchor="middle" font-family="Liberation Sans, sans-serif" font-weight="bold" font-size="11.300" fill="currentColor" stroke="none">S</text></svg>
<svg class="ic" style="left:550.0px;top:548.6px;color:#46464f;" width="24" height="24" viewBox="0 0 24 24"><rect x="2.100" y="3.400" width="19.800" height="19.400" rx="3.600" stroke-width="1.900"/><path d="M6.800 0.900v2.500M17.400 0.900v2.500" stroke-width="1.900"/><path d="M2.500 7.400h19" stroke-width="1.800" stroke-linecap="butt"/><text x="12" y="19.900" text-anchor="middle" font-family="Liberation Sans, sans-serif" font-weight="bold" font-size="11.300" fill="currentColor" stroke="none">D</text></svg>
<svg class="ic" style="left:598.0px;top:548.6px;color:#46464f;" width="24" height="24" viewBox="0 0 24 24"><rect x="2.100" y="3.400" width="19.800" height="19.400" rx="3.600" stroke-width="1.900"/><path d="M6.800 0.900v2.500M17.400 0.900v2.500" stroke-width="1.900"/><path d="M2.500 7.400h19" stroke-width="1.800" stroke-linecap="butt"/><text x="12" y="19.900" text-anchor="middle" font-family="Liberation Sans, sans-serif" font-weight="bold" font-size="11.300" fill="currentColor" stroke="none">F</text></svg>
<svg class="ic" style="left:652.0px;top:548.6px;color:#34343b;" width="24" height="24" viewBox="0 0 24 24"><circle cx="12" cy="12.300" r="10.700" stroke-width="2.100"/><path d="M5.500 12.300l3 3 2.600-2.600M10.800 14l2 1.900 5.800-6.400" stroke-width="2"/></svg>
<svg class="ic" style="left:700.0px;top:548.6px;color:#c9c9cf;" width="24" height="24" viewBox="0 0 24 24"><circle cx="12" cy="12" r="10.700" stroke-width="2"/><path d="M7.900 12.500l2.900 2.900 5.400-5.900" stroke-width="2"/></svg>
<svg class="ic" style="left:748.0px;top:548.6px;color:#c9c9cf;" width="24" height="24" viewBox="0 0 24 24"><circle cx="12" cy="12" r="10.700" stroke-width="2"/><path d="M8 8l8 8M16 8l-8 8" stroke-width="2"/></svg>
<svg class="ic" style="left:1888.0px;top:548.6px;color:#c9c9cf;" width="24" height="24" viewBox="0 0 24 24"><rect x="0.900" y="0.900" width="22.200" height="22.200" rx="2.800" stroke-width="1.900"/><path d="M16.200 1v22" stroke-width="1.900"/></svg>
<div style="left:189px;top:539px;width:1px;height:42px;background:#bcbcc4"></div>
<div style="left:290px;top:539px;width:1px;height:42px;background:#bcbcc4"></div>
<div style="left:391px;top:539px;width:1px;height:42px;background:#bcbcc4"></div>
<div style="left:637px;top:539px;width:1px;height:42px;background:#bcbcc4"></div>
<div class="l" style="left:53px;top:583px;width:880px;height:24px;line-height:24px;font-size:14px;color:#1c1c1c;letter-spacing:0.36px">02.01.03 Устройство буронабивных свай захватка 3. Сроки 20.10.2025 - 21.10.2025. Прогресс: 100%.</div>
<div style="left:45px;top:607px;width:894px;height:291px;background:#fff;border-top:1px solid #bcbcc4"></div>
<div style="left:45px;top:608px;width:894px;height:23px;background:#f0f0f2"></div>
<div class="t" style="left:45px;top:609px;width:181px;height:23px;line-height:23px;font-size:12.2px;font-weight:bold;color:#1c1c1c">Наименование</div>
<div class="t" style="left:227px;top:609px;width:117px;height:23px;line-height:23px;font-size:12.2px;font-weight:bold;color:#1c1c1c">Ед. изм.</div>
<div class="t" style="left:345px;top:609px;width:113px;height:23px;line-height:23px;font-size:12.2px;font-weight:bold;color:#1c1c1c;letter-spacing:0.1px">Плановое коли...</div>
<div class="t" style="left:459px;top:609px;width:114px;height:23px;line-height:23px;font-size:12.2px;font-weight:bold;color:#1c1c1c">Фактическое ко...</div>
<div class="t" style="left:574px;top:609px;width:99px;height:23px;line-height:23px;font-size:12.2px;font-weight:bold;color:#1c1c1c">Остаток</div>
<div class="t" style="left:674px;top:609px;width:166px;height:23px;line-height:23px;font-size:12.2px;font-weight:bold;color:#1c1c1c;letter-spacing:0.6px">Нераспределенное пл...</div>
<div class="t" style="left:841px;top:609px;width:97px;height:23px;line-height:23px;font-size:12.2px;font-weight:bold;color:#1c1c1c">Долг</div>
<div style="left:45px;top:631px;width:881px;height:30px;background:#fff"></div>
<svg class="ic" style="left:49.5px;top:634.5px;color:#46464f;" width="21" height="21" viewBox="0 0 24 24"><circle cx="12" cy="12" r="11" stroke-width="1.300"/><path d="M9 6h6v3.500H9zM5.500 9.500h6V13h-6zM12.500 9.500h6V13h-6zM5.500 13h6v3.500h-6zM12.500 13h6v3.500h-6zM5.500 11.200h6M12.500 11.200h6M9 7.700h6M5.500 14.800h6M12.500 14.800h6" stroke-width="1"/></svg>
<div class="l" style="left:78px;top:631px;width:148px;height:30px;line-height:30px;font-size:14px;color:#1c1c1c;letter-spacing:0.2px">Стоимость по ресурсам</div>
<div class="t" style="left:227px;top:631px;width:117px;height:30px;line-height:30px;font-size:14px;color:#1c1c1c">руб</div>
<div class="t" style="left:345px;top:631px;width:113px;height:30px;line-height:30px;font-size:14px;color:#1c1c1c;letter-spacing:0.2px">206 080</div>
<div class="t" style="left:459px;top:631px;width:114px;height:30px;line-height:30px;font-size:14px;color:#1c1c1c;letter-spacing:0.2px">206 080</div>
<div class="t" style="left:574px;top:631px;width:99px;height:30px;line-height:30px;font-size:14px;color:#1c1c1c;letter-spacing:0.2px">103 040</div>
<div class="t" style="left:674px;top:631px;width:166px;height:30px;line-height:30px;font-size:14px;color:#1c1c1c;letter-spacing:0.2px">103 040</div>
<div class="t" style="left:841px;top:631px;width:97px;height:30px;line-height:30px;font-size:14px;color:#1c1c1c;letter-spacing:0.2px">0</div>
<div style="left:45px;top:661px;width:881px;height:30px;background:#fff"></div>
<div style="left:45px;top:660px;width:881px;height:2px;background:#d8d8dd"></div>
<svg class="ic" style="left:49.5px;top:664.5px;color:#46464f;" width="21" height="21" viewBox="0 0 24 24"><circle cx="12" cy="12" r="11" stroke-width="1.300"/><circle cx="12" cy="8.500" r="3.200" fill="currentColor" stroke="none"/><path d="M5.500 17.500c0-3.500 3-5 6.500-5s6.500 1.500 6.500 5z" fill="currentColor" stroke="none"/></svg>
<div class="l" style="left:78px;top:661px;width:148px;height:30px;line-height:30px;font-size:14px;color:#1c1c1c;letter-spacing:0.2px">Трудозатраты по ресурсам</div>
<div class="t" style="left:227px;top:661px;width:117px;height:30px;line-height:30px;font-size:14px;color:#1c1c1c">ч-ч</div>
<div class="t" style="left:345px;top:661px;width:113px;height:30px;line-height:30px;font-size:14px;color:#1c1c1c;letter-spacing:0.2px">48</div>
<div class="t" style="left:459px;top:661px;width:114px;height:30px;line-height:30px;font-size:14px;color:#1c1c1c;letter-spacing:0.2px">48</div>
<div class="t" style="left:574px;top:661px;width:99px;height:30px;line-height:30px;font-size:14px;color:#1c1c1c;letter-spacing:0.2px">24</div>
<div class="t" style="left:674px;top:661px;width:166px;height:30px;line-height:30px;font-size:14px;color:#1c1c1c;letter-spacing:0.2px">24</div>
<div class="t" style="left:841px;top:661px;width:97px;height:30px;line-height:30px;font-size:14px;color:#1c1c1c;letter-spacing:0.2px">0</div>
<div style="left:45px;top:691px;width:881px;height:30px;background:#fff"></div>
<div style="left:45px;top:690px;width:881px;height:2px;background:#d8d8dd"></div>
<svg class="ic" style="left:49.5px;top:694.5px;color:#46464f;" width="21" height="21" viewBox="0 0 24 24"><circle cx="12" cy="12" r="10.300" stroke-width="2.200"/><circle cx="12" cy="12" r="2.500" fill="currentColor" stroke="none"/><path d="M2.500 10.800c3.200-.9 5.800-.7 7.500.7M21.500 10.800c-3.200-.9-5.800-.7-7.500.7M12 14v7.500" stroke-width="2.300"/></svg>
<div class="l" style="left:78px;top:691px;width:148px;height:30px;line-height:30px;font-size:14px;color:#1c1c1c;letter-spacing:0.2px">Физобъем</div>
<div class="t" style="left:227px;top:691px;width:117px;height:30px;line-height:30px;font-size:14px;color:#1c1c1c">шт</div>
<div class="t" style="left:345px;top:691px;width:113px;height:30px;line-height:30px;font-size:14px;color:#1c1c1c;letter-spacing:0.2px">4</div>
<div class="t" style="left:459px;top:691px;width:114px;height:30px;line-height:30px;font-size:14px;color:#1c1c1c;letter-spacing:0.2px">4</div>
<div class="t" style="left:574px;top:691px;width:99px;height:30px;line-height:30px;font-size:14px;color:#1c1c1c;letter-spacing:0.2px">4</div>
<div class="t" style="left:674px;top:691px;width:166px;height:30px;line-height:30px;font-size:14px;color:#1c1c1c;letter-spacing:0.2px">4</div>
<div class="t" style="left:841px;top:691px;width:97px;height:30px;line-height:30px;font-size:14px;color:#1c1c1c;letter-spacing:0.2px"></div>
<div style="left:45px;top:722px;width:881px;height:30px;background:#fafafa"></div>
<div style="left:45px;top:720px;width:894px;height:3px;background:#b6b6bd"></div>
<svg class="ic" style="left:49.5px;top:725.5px;color:#46464f;" width="21" height="21" viewBox="0 0 24 24"><path d="M10.500 2.500l5.500 1.500 5.500 9.500-2 5.500-6 .5-3-6z" fill="currentColor" stroke="none"/><circle cx="4.500" cy="19" r="2.700" stroke-width="1.200" fill="#fff"/><circle cx="10.500" cy="19" r="2.700" stroke-width="1.200" fill="#fff"/><circle cx="16.500" cy="19" r="2.700" stroke-width="1.200" fill="#fff"/><circle cx="7.500" cy="14" r="2.700" stroke-width="1.200" fill="#fff"/><circle cx="13.500" cy="14" r="2.700" stroke-width="1.200" fill="#fff"/><circle cx="10.500" cy="9" r="2.700" stroke-width="1.200" fill="#fff"/></svg>
<div class="l" style="left:78px;top:722px;width:148px;height:30px;line-height:30px;font-size:14px;color:#1c1c1c;letter-spacing:0.2px">Устройство буронабивных свай</div>
<div class="t" style="left:227px;top:722px;width:117px;height:30px;line-height:30px;font-size:14px;color:#1c1c1c">шт</div>
<div class="t" style="left:345px;top:722px;width:113px;height:30px;line-height:30px;font-size:14px;color:#1c1c1c;letter-spacing:0.2px">4</div>
<div class="t" style="left:459px;top:722px;width:114px;height:30px;line-height:30px;font-size:14px;color:#1c1c1c;letter-spacing:0.2px">4</div>
<div class="t" style="left:574px;top:722px;width:99px;height:30px;line-height:30px;font-size:14px;color:#1c1c1c;letter-spacing:0.2px">0</div>
<div class="t" style="left:674px;top:722px;width:166px;height:30px;line-height:30px;font-size:14px;color:#1c1c1c;letter-spacing:0.2px">0</div>
<div class="t" style="left:841px;top:722px;width:97px;height:30px;line-height:30px;font-size:14px;color:#1c1c1c;letter-spacing:0.2px">0</div>
<div style="left:45px;top:752px;width:881px;height:30px;background:#fff"></div>
<div style="left:45px;top:751px;width:881px;height:2px;background:#d8d8dd"></div>
<svg class="ic" style="left:74px;top:754px;color:#111;stroke-width:2;stroke-linecap:butt;stroke-linejoin:miter" width="20" height="16" viewBox="0 0 20 16"><path d="M1 -1v14.500h19"/></svg>
<svg class="ic" style="left:98.0px;top:756.0px;color:#55555d;" width="20" height="20" viewBox="0 0 24 24"><path d="M1.500 5.500h13v8h-13zM4.700 5.500v6M7.900 5.500v6M11.100 5.500v6" stroke-width="1.700" stroke-linejoin="miter"/><path d="M12.500 3.500l3-1.200" stroke-width="1.700"/><path d="M15 7.500h4.300l3.700 4.200v5.300H1.500v-3.500H15z" fill="currentColor" stroke-width="1.200"/><rect x="16.600" y="9.200" width="3.400" height="3.200" fill="#fff" stroke="none"/><circle cx="6.200" cy="18" r="2.600" fill="#fff" stroke-width="1.700"/><circle cx="18" cy="18" r="2.600" fill="#fff" stroke-width="1.700"/></svg>
<div class="l" style="left:126px;top:752px;width:100px;height:30px;line-height:30px;font-size:14px;color:#1c1c1c;letter-spacing:0.2px">Ивановец</div>
<div class="t" style="left:227px;top:752px;width:117px;height:30px;line-height:30px;font-size:14px;color:#1c1c1c">маш-ч</div>
<div class="t" style="left:345px;top:752px;width:113px;height:30px;line-height:30px;font-size:14px;color:#1c1c1c;letter-spacing:0.2px">180</div>
<div class="t" style="left:459px;top:752px;width:114px;height:30px;line-height:30px;font-size:14px;color:#1c1c1c;letter-spacing:0.2px">180</div>
<div class="t" style="left:574px;top:752px;width:99px;height:30px;line-height:30px;font-size:14px;color:#1c1c1c;letter-spacing:0.2px">0</div>
<div class="t" style="left:674px;top:752px;width:166px;height:30px;line-height:30px;font-size:14px;color:#1c1c1c;letter-spacing:0.2px">0</div>
<div class="t" style="left:841px;top:752px;width:97px;height:30px;line-height:30px;font-size:14px;color:#1c1c1c;letter-spacing:0.2px">0</div>
<div style="left:45px;top:782px;width:881px;height:30px;background:#fafafa"></div>
<div style="left:45px;top:781px;width:881px;height:2px;background:#d8d8dd"></div>
<svg class="ic" style="left:74px;top:784px;color:#111;stroke-width:2;stroke-linecap:butt;stroke-linejoin:miter" width="20" height="16" viewBox="0 0 20 16"><path d="M1 -1v14.500h19"/></svg>
<svg class="ic" style="left:98.0px;top:786.0px;color:#55555d;" width="20" height="20" viewBox="0 0 24 24"><path d="M1.500 5.500h13v8h-13zM4.700 5.500v6M7.900 5.500v6M11.100 5.500v6" stroke-width="1.700" stroke-linejoin="miter"/><path d="M12.500 3.500l3-1.200" stroke-width="1.700"/><path d="M15 7.500h4.300l3.700 4.200v5.300H1.500v-3.500H15z" fill="currentColor" stroke-width="1.200"/><rect x="16.600" y="9.200" width="3.400" height="3.200" fill="#fff" stroke="none"/><circle cx="6.200" cy="18" r="2.600" fill="#fff" stroke-width="1.700"/><circle cx="18" cy="18" r="2.600" fill="#fff" stroke-width="1.700"/></svg>
<div class="l" style="left:126px;top:782px;width:100px;height:30px;line-height:30px;font-size:14px;color:#1c1c1c;letter-spacing:0.2px">Liebherr</div>
<div class="t" style="left:227px;top:782px;width:117px;height:30px;line-height:30px;font-size:14px;color:#1c1c1c">маш-ч</div>
<div class="t" style="left:345px;top:782px;width:113px;height:30px;line-height:30px;font-size:14px;color:#1c1c1c;letter-spacing:0.2px">900</div>
<div class="t" style="left:459px;top:782px;width:114px;height:30px;line-height:30px;font-size:14px;color:#1c1c1c;letter-spacing:0.2px">900</div>
<div class="t" style="left:574px;top:782px;width:99px;height:30px;line-height:30px;font-size:14px;color:#1c1c1c;letter-spacing:0.2px">0</div>
<div class="t" style="left:674px;top:782px;width:166px;height:30px;line-height:30px;font-size:14px;color:#1c1c1c;letter-spacing:0.2px">0</div>
<div class="t" style="left:841px;top:782px;width:97px;height:30px;line-height:30px;font-size:14px;color:#1c1c1c;letter-spacing:0.2px">0</div>
<div style="left:45px;top:812px;width:881px;height:30px;background:#fff"></div>
<div style="left:45px;top:811px;width:881px;height:2px;background:#d8d8dd"></div>
<svg class="ic" style="left:74px;top:814px;color:#111;stroke-width:2;stroke-linecap:butt;stroke-linejoin:miter" width="20" height="16" viewBox="0 0 20 16"><path d="M1 -1v14.500h19"/></svg>
<svg class="ic" style="left:97.5px;top:815.5px;color:#55555d;" width="21" height="21" viewBox="0 0 24 24"><circle cx="11.300" cy="3" r="2.300" fill="currentColor" stroke="none"/><path d="M10.500 5.800L4.500 9.500 3.500 14.500l2.500 1.500 3.500.500 1-4.500 3-2.500z" fill="currentColor" stroke="none"/><path d="M5.500 15.500L2 22M8.500 15.500l.500 6.500M10 8.500l2.500 3.500 3 1.500" stroke-width="2.200"/><path d="M11.500 22.300l6.200-9.300 5.800 9.300z" fill="currentColor" stroke="none"/><path d="M9.500 9.500l6.500 8" stroke-width="1.500"/></svg>
<div class="l" style="left:126px;top:812px;width:100px;height:30px;line-height:30px;font-size:14px;color:#1c1c1c;letter-spacing:0.2px">Бетонщик</div>
<div class="t" style="left:227px;top:812px;width:117px;height:30px;line-height:30px;font-size:14px;color:#1c1c1c">ч-ч</div>
<div class="t" style="left:345px;top:812px;width:113px;height:30px;line-height:30px;font-size:14px;color:#1c1c1c;letter-spacing:0.2px">160</div>
<div class="t" style="left:459px;top:812px;width:114px;height:30px;line-height:30px;font-size:14px;color:#1c1c1c;letter-spacing:0.2px">160</div>
<div class="t" style="left:574px;top:812px;width:99px;height:30px;line-height:30px;font-size:14px;color:#1c1c1c;letter-spacing:0.2px">0</div>
<div class="t" style="left:674px;top:812px;width:166px;height:30px;line-height:30px;font-size:14px;color:#1c1c1c;letter-spacing:0.2px">0</div>
<div class="t" style="left:841px;top:812px;width:97px;height:30px;line-height:30px;font-size:14px;color:#1c1c1c;letter-spacing:0.2px">0</div>
<div style="left:45px;top:842px;width:881px;height:30px;background:#fafafa"></div>
<div style="left:45px;top:841px;width:881px;height:2px;background:#d8d8dd"></div>
<svg class="ic" style="left:74px;top:844px;color:#111;stroke-width:2;stroke-linecap:butt;stroke-linejoin:miter" width="20" height="16" viewBox="0 0 20 16"><path d="M1 -1v14.500h19"/></svg>
<svg class="ic" style="left:97.5px;top:845.5px;color:#55555d;" width="21" height="21" viewBox="0 0 24 24"><circle cx="11.300" cy="3" r="2.300" fill="currentColor" stroke="none"/><path d="M10.500 5.800L4.500 9.500 3.500 14.500l2.500 1.500 3.500.500 1-4.500 3-2.500z" fill="currentColor" stroke="none"/><path d="M5.500 15.500L2 22M8.500 15.500l.500 6.500M10 8.500l2.500 3.500 3 1.500" stroke-width="2.200"/><path d="M11.500 22.300l6.200-9.300 5.800 9.300z" fill="currentColor" stroke="none"/><path d="M9.500 9.500l6.500 8" stroke-width="1.500"/></svg>
<div class="l" style="left:126px;top:842px;width:100px;height:30px;line-height:30px;font-size:14px;color:#1c1c1c;letter-spacing:0.2px">Разнорабочий</div>
<div class="t" style="left:227px;top:842px;width:117px;height:30px;line-height:30px;font-size:14px;color:#1c1c1c">ч-ч</div>
<div class="t" style="left:345px;top:842px;width:113px;height:30px;line-height:30px;font-size:14px;color:#1c1c1c;letter-spacing:0.2px">180</div>
<div class="t" style="left:459px;top:842px;width:114px;height:30px;line-height:30px;font-size:14px;color:#1c1c1c;letter-spacing:0.2px">180</div>
<div class="t" style="left:574px;top:842px;width:99px;height:30px;line-height:30px;font-size:14px;color:#1c1c1c;letter-spacing:0.2px">0</div>
<div class="t" style="left:674px;top:842px;width:166px;height:30px;line-height:30px;font-size:14px;color:#1c1c1c;letter-spacing:0.2px">0</div>
<div class="t" style="left:841px;top:842px;width:97px;height:30px;line-height:30px;font-size:14px;color:#1c1c1c;letter-spacing:0.2px">0</div>
<div style="left:45px;top:872px;width:881px;height:26px;background:#fff"></div>
<div style="left:45px;top:871px;width:881px;height:2px;background:#d8d8dd"></div>
<svg class="ic" style="left:74px;top:874px;color:#111;stroke-width:2;stroke-linecap:butt;stroke-linejoin:miter" width="20" height="16" viewBox="0 0 20 16"><path d="M1 -1v14.500h19"/></svg>
<svg class="ic" style="left:97.5px;top:875.5px;color:#55555d;" width="21" height="21" viewBox="0 0 24 24"><path d="M10.500 2.500l5.500 1.500 5.500 9.500-2 5.500-6 .5-3-6z" fill="currentColor" stroke="none"/><circle cx="4.500" cy="19" r="2.700" stroke-width="1.200" fill="#fff"/><circle cx="10.500" cy="19" r="2.700" stroke-width="1.200" fill="#fff"/><circle cx="16.500" cy="19" r="2.700" stroke-width="1.200" fill="#fff"/><circle cx="7.500" cy="14" r="2.700" stroke-width="1.200" fill="#fff"/><circle cx="13.500" cy="14" r="2.700" stroke-width="1.200" fill="#fff"/><circle cx="10.500" cy="9" r="2.700" stroke-width="1.200" fill="#fff"/></svg>
<div class="l" style="left:126px;top:872px;width:100px;height:30px;line-height:30px;font-size:14px;color:#1c1c1c;letter-spacing:0.2px">Свая ж/б</div>
<div class="t" style="left:227px;top:872px;width:117px;height:30px;line-height:30px;font-size:14px;color:#1c1c1c">шт</div>
<div class="t" style="left:345px;top:872px;width:113px;height:30px;line-height:30px;font-size:14px;color:#1c1c1c;letter-spacing:0.2px">4</div>
<div class="t" style="left:459px;top:872px;width:114px;height:30px;line-height:30px;font-size:14px;color:#1c1c1c;letter-spacing:0.2px">4</div>
<div class="t" style="left:574px;top:872px;width:99px;height:30px;line-height:30px;font-size:14px;color:#1c1c1c;letter-spacing:0.2px">0</div>
<div class="t" style="left:674px;top:872px;width:166px;height:30px;line-height:30px;font-size:14px;color:#1c1c1c;letter-spacing:0.2px">0</div>
<div class="t" style="left:841px;top:872px;width:97px;height:30px;line-height:30px;font-size:14px;color:#1c1c1c;letter-spacing:0.2px">0</div>
<div style="left:225px;top:608px;width:2px;height:290px;background:#d8d8dd"></div>
<div style="left:343px;top:608px;width:2px;height:290px;background:#d8d8dd"></div>
<div style="left:457px;top:608px;width:2px;height:290px;background:#d8d8dd"></div>
<div style="left:572px;top:608px;width:2px;height:290px;background:#d8d8dd"></div>
<div style="left:672px;top:608px;width:2px;height:290px;background:#d8d8dd"></div>
<div style="left:839px;top:608px;width:2px;height:290px;background:#d8d8dd"></div>
<div style="left:45px;top:630px;width:894px;height:2px;background:#c6c6cc"></div>
<div style="left:926px;top:631px;width:12px;height:267px;background:#f4f4f6"></div>
<div style="left:927px;top:768px;width:10px;height:98px;background:#d9d9dd;border-radius:5px"></div>
<div style="left:45px;top:898px;width:894px;height:13px;background:#f0f0f2"></div>
<div style="left:926px;top:898px;width:13px;height:13px;background:#fbfbfc"></div>
<div style="left:227px;top:899px;width:258px;height:11px;background:#d9d9dd;border-radius:6px"></div>
<div style="left:939px;top:582px;width:5px;height:329px;background:#b5b5bd"></div>
<div style="left:939.5px;top:738.5px;width:4px;height:4px;background:#4a4a50;border-radius:2px"></div>
<div style="left:939.5px;top:744.5px;width:4px;height:4px;background:#4a4a50;border-radius:2px"></div>
<div style="left:939.5px;top:750.5px;width:4px;height:4px;background:#4a4a50;border-radius:2px"></div>
<div style="left:944px;top:582px;width:974px;height:316px;background:#f0f0f2"></div>
<div style="left:945px;top:606px;width:965px;height:1px;background:#bcbcc4"></div>
<div style="left:945px;top:631px;width:965px;height:1px;background:#bcbcc4"></div>
<div class="t" style="left:945px;top:583px;width:350px;height:23px;line-height:23px;font-size:12px;letter-spacing:-0.3px;color:#222">20.10.2025</div>
<div class="t" style="left:945px;top:608px;width:70px;height:24px;line-height:24px;font-size:12px;letter-spacing:-0.3px;color:#222">Согл.план</div>
<div class="t" style="left:1015px;top:608px;width:70px;height:24px;line-height:24px;font-size:12px;letter-spacing:-0.3px;color:#222">Опер.план</div>
<div class="t" style="left:1085px;top:608px;width:70px;height:24px;line-height:24px;font-size:12px;letter-spacing:-0.3px;color:#222">Факт</div>
<div class="t" style="left:1155px;top:608px;width:70px;height:24px;line-height:24px;font-size:12px;letter-spacing:-0.3px;color:#222;text-align:left;padding-left:2px">Уд. трудоз...</div>
<div class="t" style="left:1225px;top:608px;width:70px;height:24px;line-height:24px;font-size:12px;letter-spacing:-0.3px;color:#222">Ставка</div>
<div class="t" style="left:1295px;top:583px;width:350px;height:23px;line-height:23px;font-size:12px;letter-spacing:-0.3px;color:#222">21.10.2025</div>
<div class="t" style="left:1295px;top:608px;width:70px;height:24px;line-height:24px;font-size:12px;letter-spacing:-0.3px;color:#222">Согл.план</div>
<div class="t" style="left:1365px;top:608px;width:70px;height:24px;line-height:24px;font-size:12px;letter-spacing:-0.3px;color:#222">Опер.план</div>
<div class="t" style="left:1435px;top:608px;width:70px;height:24px;line-height:24px;font-size:12px;letter-spacing:-0.3px;color:#222">Факт</div>
<div class="t" style="left:1505px;top:608px;width:70px;height:24px;line-height:24px;font-size:12px;letter-spacing:-0.3px;color:#222;text-align:left;padding-left:2px">Уд. трудоз...</div>
<div class="t" style="left:1575px;top:608px;width:70px;height:24px;line-height:24px;font-size:12px;letter-spacing:-0.3px;color:#222">Ставка</div>
<div class="t" style="left:1645px;top:583px;width:346px;height:23px;line-height:23px;font-size:12px;letter-spacing:-0.3px;color:#222">22.10.2025</div>
<div class="t" style="left:1645px;top:608px;width:70px;height:24px;line-height:24px;font-size:12px;letter-spacing:-0.3px;color:#222">Согл.план</div>
<div class="t" style="left:1715px;top:608px;width:70px;height:24px;line-height:24px;font-size:12px;letter-spacing:-0.3px;color:#222">Опер.план</div>
<div class="t" style="left:1785px;top:608px;width:70px;height:24px;line-height:24px;font-size:12px;letter-spacing:-0.3px;color:#222">Факт</div>
<div class="t" style="left:1855px;top:608px;width:55px;height:24px;line-height:24px;font-size:12px;letter-spacing:-0.3px;color:#222;text-align:left;padding-left:2px">Уд. трудоз...</div>
<div style="left:945px;top:631px;width:965px;height:1px;border-top:1px dashed #b4b4bb"></div>
<div class="t" style="left:945px;top:632px;width:70px;height:30px;line-height:30px;font-size:12.5px;letter-spacing:-0.3px;color:#1c1c1c">51 520</div>
<div class="t" style="left:1015px;top:632px;width:70px;height:30px;line-height:30px;font-size:12.5px;letter-spacing:-0.3px;color:#1c1c1c">51 520</div>
<div class="t" style="left:1085px;top:632px;width:70px;height:30px;line-height:30px;font-size:12.5px;letter-spacing:-0.3px;color:#1c1c1c">51 520</div>
<div class="t" style="left:1295px;top:632px;width:70px;height:30px;line-height:30px;font-size:12.5px;letter-spacing:-0.3px;color:#1c1c1c">51 520</div>
<div class="t" style="left:1365px;top:632px;width:70px;height:30px;line-height:30px;font-size:12.5px;letter-spacing:-0.3px;color:#1c1c1c">51 520</div>
<div class="t" style="left:1435px;top:632px;width:70px;height:30px;line-height:30px;font-size:12.5px;letter-spacing:-0.3px;color:#1c1c1c">51 520</div>
<div style="left:945px;top:661px;width:965px;height:1px;border-top:1px dashed #b4b4bb"></div>
<div class="t" style="left:945px;top:662px;width:70px;height:30px;line-height:30px;font-size:12.5px;letter-spacing:-0.3px;color:#1c1c1c">12</div>
<div class="t" style="left:1015px;top:662px;width:70px;height:30px;line-height:30px;font-size:12.5px;letter-spacing:-0.3px;color:#1c1c1c">12</div>
<div class="t" style="left:1085px;top:662px;width:70px;height:30px;line-height:30px;font-size:12.5px;letter-spacing:-0.3px;color:#1c1c1c">12</div>
<div class="t" style="left:1295px;top:662px;width:70px;height:30px;line-height:30px;font-size:12.5px;letter-spacing:-0.3px;color:#1c1c1c">12</div>
<div class="t" style="left:1365px;top:662px;width:70px;height:30px;line-height:30px;font-size:12.5px;letter-spacing:-0.3px;color:#1c1c1c">12</div>
<div class="t" style="left:1435px;top:662px;width:70px;height:30px;line-height:30px;font-size:12.5px;letter-spacing:-0.3px;color:#1c1c1c">12</div>
<div style="left:945px;top:691px;width:965px;height:1px;border-top:1px dashed #b4b4bb"></div>
<div style="left:944px;top:722px;width:701px;height:31px;background:#c5dcf1"></div>
<div style="left:1645px;top:722px;width:265px;height:31px;background:#fff"></div>
<div style="left:945px;top:721px;width:965px;height:2px;background:repeating-linear-gradient(90deg,#a0a0a7 0 3px,transparent 3px 5px)"></div>
<div class="t" style="left:946px;top:723px;width:70px;height:30px;line-height:30px;font-size:12.5px;letter-spacing:-0.3px;color:#77777d">2</div>
<div class="t" style="left:1016px;top:723px;width:70px;height:30px;line-height:30px;font-size:12.5px;letter-spacing:-0.3px;color:#77777d">2</div>
<svg class="ic" style="left:1084px;top:723px;fill:#a6d8b8;stroke:none" width="21" height="20" viewBox="0 0 21 20"><path d="M0 0h20.500L0 19.500z"/></svg>
<div class="t" style="left:1086px;top:723px;width:70px;height:30px;line-height:30px;font-size:12.5px;letter-spacing:-0.3px;color:#62bd7c">2</div>
<div class="t" style="left:1156px;top:723px;width:70px;height:30px;line-height:30px;font-size:12.5px;letter-spacing:-0.3px;color:#77777d">6</div>
<div class="t" style="left:1226px;top:723px;width:70px;height:30px;line-height:30px;font-size:12.5px;letter-spacing:-0.3px;color:#77777d">25 760</div>
<div class="t" style="left:1296px;top:723px;width:70px;height:30px;line-height:30px;font-size:12.5px;letter-spacing:-0.3px;color:#77777d">2</div>
<div class="t" style="left:1366px;top:723px;width:70px;height:30px;line-height:30px;font-size:12.5px;letter-spacing:-0.3px;color:#77777d">2</div>
<svg class="ic" style="left:1434px;top:723px;fill:#a6d8b8;stroke:none" width="21" height="20" viewBox="0 0 21 20"><path d="M0 0h20.500L0 19.500z"/></svg>
<div class="t" style="left:1436px;top:723px;width:70px;height:30px;line-height:30px;font-size:12.5px;letter-spacing:-0.3px;color:#62bd7c">2</div>
<div class="t" style="left:1506px;top:723px;width:70px;height:30px;line-height:30px;font-size:12.5px;letter-spacing:-0.3px;color:#77777d">6</div>
<div class="t" style="left:1576px;top:723px;width:70px;height:30px;line-height:30px;font-size:12.5px;letter-spacing:-0.3px;color:#77777d">25 760</div>
<div class="t" style="left:1855px;top:723px;width:70px;height:30px;line-height:30px;font-size:12.5px;color:#8a8a90">6</div>
<div style="left:944px;top:753px;width:701px;height:30px;background:#c5dcf1"></div>
<div style="left:1645px;top:753px;width:265px;height:30px;background:#fff"></div>
<div style="left:945px;top:752px;width:965px;height:1px;border-top:1px dashed #b4b4bb"></div>
<div class="t" style="left:946px;top:753px;width:70px;height:30px;line-height:30px;font-size:12.5px;letter-spacing:-0.3px;color:#77777d">90</div>
<div class="t" style="left:1016px;top:753px;width:70px;height:30px;line-height:30px;font-size:12.5px;letter-spacing:-0.3px;color:#77777d">90</div>
<svg class="ic" style="left:1084px;top:753px;fill:#a6d8b8;stroke:none" width="21" height="20" viewBox="0 0 21 20"><path d="M0 0h20.500L0 19.500z"/></svg>
<div class="t" style="left:1086px;top:753px;width:70px;height:30px;line-height:30px;font-size:12.5px;letter-spacing:-0.3px;color:#62bd7c">90</div>
<div class="t" style="left:1156px;top:753px;width:70px;height:30px;line-height:30px;font-size:12.5px;letter-spacing:-0.3px;color:#77777d">0</div>
<div class="t" style="left:1226px;top:753px;width:70px;height:30px;line-height:30px;font-size:12.5px;letter-spacing:-0.3px;color:#77777d">8 000</div>
<div class="t" style="left:1296px;top:753px;width:70px;height:30px;line-height:30px;font-size:12.5px;letter-spacing:-0.3px;color:#77777d">90</div>
<div class="t" style="left:1366px;top:753px;width:70px;height:30px;line-height:30px;font-size:12.5px;letter-spacing:-0.3px;color:#77777d">90</div>
<svg class="ic" style="left:1434px;top:753px;fill:#a6d8b8;stroke:none" width="21" height="20" viewBox="0 0 21 20"><path d="M0 0h20.500L0 19.500z"/></svg>
<div class="t" style="left:1436px;top:753px;width:70px;height:30px;line-height:30px;font-size:12.5px;letter-spacing:-0.3px;color:#62bd7c">90</div>
<div class="t" style="left:1506px;top:753px;width:70px;height:30px;line-height:30px;font-size:12.5px;letter-spacing:-0.3px;color:#77777d">0</div>
<div class="t" style="left:1576px;top:753px;width:70px;height:30px;line-height:30px;font-size:12.5px;letter-spacing:-0.3px;color:#77777d">8 000</div>
<div class="t" style="left:1855px;top:753px;width:70px;height:30px;line-height:30px;font-size:12.5px;color:#8a8a90">0</div>
<div style="left:944px;top:783px;width:701px;height:30px;background:#c5dcf1"></div>
<div style="left:1645px;top:783px;width:265px;height:30px;background:#fff"></div>
<div style="left:945px;top:782px;width:965px;height:1px;border-top:1px dashed #b4b4bb"></div>
<div class="t" style="left:946px;top:783px;width:70px;height:30px;line-height:30px;font-size:12.5px;letter-spacing:-0.3px;color:#77777d">450</div>
<div class="t" style="left:1016px;top:783px;width:70px;height:30px;line-height:30px;font-size:12.5px;letter-spacing:-0.3px;color:#77777d">450</div>
<svg class="ic" style="left:1084px;top:783px;fill:#a6d8b8;stroke:none" width="21" height="20" viewBox="0 0 21 20"><path d="M0 0h20.500L0 19.500z"/></svg>
<div class="t" style="left:1086px;top:783px;width:70px;height:30px;line-height:30px;font-size:12.5px;letter-spacing:-0.3px;color:#62bd7c">450</div>
<div class="t" style="left:1156px;top:783px;width:70px;height:30px;line-height:30px;font-size:12.5px;letter-spacing:-0.3px;color:#77777d">0</div>
<div class="t" style="left:1226px;top:783px;width:70px;height:30px;line-height:30px;font-size:12.5px;letter-spacing:-0.3px;color:#77777d">16 800</div>
<div class="t" style="left:1296px;top:783px;width:70px;height:30px;line-height:30px;font-size:12.5px;letter-spacing:-0.3px;color:#77777d">450</div>
<div class="t" style="left:1366px;top:783px;width:70px;height:30px;line-height:30px;font-size:12.5px;letter-spacing:-0.3px;color:#77777d">450</div>
<svg class="ic" style="left:1434px;top:783px;fill:#a6d8b8;stroke:none" width="21" height="20" viewBox="0 0 21 20"><path d="M0 0h20.500L0 19.500z"/></svg>
<div class="t" style="left:1436px;top:783px;width:70px;height:30px;line-height:30px;font-size:12.5px;letter-spacing:-0.3px;color:#62bd7c">450</div>
<div class="t" style="left:1506px;top:783px;width:70px;height:30px;line-height:30px;font-size:12.5px;letter-spacing:-0.3px;color:#77777d">0</div>
<div class="t" style="left:1576px;top:783px;width:70px;height:30px;line-height:30px;font-size:12.5px;letter-spacing:-0.3px;color:#77777d">16 800</div>
<div class="t" style="left:1855px;top:783px;width:70px;height:30px;line-height:30px;font-size:12.5px;color:#8a8a90">0</div>
<div style="left:944px;top:813px;width:701px;height:30px;background:#c5dcf1"></div>
<div style="left:1645px;top:813px;width:265px;height:30px;background:#fff"></div>
<div style="left:945px;top:812px;width:965px;height:1px;border-top:1px dashed #b4b4bb"></div>
<div class="t" style="left:946px;top:813px;width:70px;height:30px;line-height:30px;font-size:12.5px;letter-spacing:-0.3px;color:#77777d">80</div>
<div class="t" style="left:1016px;top:813px;width:70px;height:30px;line-height:30px;font-size:12.5px;letter-spacing:-0.3px;color:#77777d">80</div>
<svg class="ic" style="left:1084px;top:813px;fill:#a6d8b8;stroke:none" width="21" height="20" viewBox="0 0 21 20"><path d="M0 0h20.500L0 19.500z"/></svg>
<div class="t" style="left:1086px;top:813px;width:70px;height:30px;line-height:30px;font-size:12.5px;letter-spacing:-0.3px;color:#62bd7c">80</div>
<div class="t" style="left:1156px;top:813px;width:70px;height:30px;line-height:30px;font-size:12.5px;letter-spacing:-0.3px;color:#77777d">0</div>
<div class="t" style="left:1226px;top:813px;width:70px;height:30px;line-height:30px;font-size:12.5px;letter-spacing:-0.3px;color:#77777d">2 500</div>
<div class="t" style="left:1296px;top:813px;width:70px;height:30px;line-height:30px;font-size:12.5px;letter-spacing:-0.3px;color:#77777d">80</div>
<div class="t" style="left:1366px;top:813px;width:70px;height:30px;line-height:30px;font-size:12.5px;letter-spacing:-0.3px;color:#77777d">80</div>
<svg class="ic" style="left:1434px;top:813px;fill:#a6d8b8;stroke:none" width="21" height="20" viewBox="0 0 21 20"><path d="M0 0h20.500L0 19.500z"/></svg>
<div class="t" style="left:1436px;top:813px;width:70px;height:30px;line-height:30px;font-size:12.5px;letter-spacing:-0.3px;color:#62bd7c">80</div>
<div class="t" style="left:1506px;top:813px;width:70px;height:30px;line-height:30px;font-size:12.5px;letter-spacing:-0.3px;color:#77777d">0</div>
<div class="t" style="left:1576px;top:813px;width:70px;height:30px;line-height:30px;font-size:12.5px;letter-spacing:-0.3px;color:#77777d">2 500</div>
<div class="t" style="left:1855px;top:813px;width:70px;height:30px;line-height:30px;font-size:12.5px;color:#8a8a90">0</div>
<div style="left:944px;top:843px;width:701px;height:30px;background:#c5dcf1"></div>
<div style="left:1645px;top:843px;width:265px;height:30px;background:#fff"></div>
<div style="left:945px;top:842px;width:965px;height:1px;border-top:1px dashed #b4b4bb"></div>
<div class="t" style="left:946px;top:843px;width:70px;height:30px;line-height:30px;font-size:12.5px;letter-spacing:-0.3px;color:#77777d">90</div>
<div class="t" style="left:1016px;top:843px;width:70px;height:30px;line-height:30px;font-size:12.5px;letter-spacing:-0.3px;color:#77777d">90</div>
<svg class="ic" style="left:1084px;top:843px;fill:#a6d8b8;stroke:none" width="21" height="20" viewBox="0 0 21 20"><path d="M0 0h20.500L0 19.500z"/></svg>
<div class="t" style="left:1086px;top:843px;width:70px;height:30px;line-height:30px;font-size:12.5px;letter-spacing:-0.3px;color:#62bd7c">90</div>
<div class="t" style="left:1156px;top:843px;width:70px;height:30px;line-height:30px;font-size:12.5px;letter-spacing:-0.3px;color:#77777d">0</div>
<div class="t" style="left:1226px;top:843px;width:70px;height:30px;line-height:30px;font-size:12.5px;letter-spacing:-0.3px;color:#77777d">1 500</div>
<div class="t" style="left:1296px;top:843px;width:70px;height:30px;line-height:30px;font-size:12.5px;letter-spacing:-0.3px;color:#77777d">90</div>
<div class="t" style="left:1366px;top:843px;width:70px;height:30px;line-height:30px;font-size:12.5px;letter-spacing:-0.3px;color:#77777d">90</div>
<svg class="ic" style="left:1434px;top:843px;fill:#a6d8b8;stroke:none" width="21" height="20" viewBox="0 0 21 20"><path d="M0 0h20.500L0 19.500z"/></svg>
<div class="t" style="left:1436px;top:843px;width:70px;height:30px;line-height:30px;font-size:12.5px;letter-spacing:-0.3px;color:#62bd7c">90</div>
<div class="t" style="left:1506px;top:843px;width:70px;height:30px;line-height:30px;font-size:12.5px;letter-spacing:-0.3px;color:#77777d">0</div>
<div class="t" style="left:1576px;top:843px;width:70px;height:30px;line-height:30px;font-size:12.5px;letter-spacing:-0.3px;color:#77777d">1 500</div>
<div class="t" style="left:1855px;top:843px;width:70px;height:30px;line-height:30px;font-size:12.5px;color:#8a8a90">0</div>
<div style="left:944px;top:873px;width:701px;height:26px;background:#c5dcf1"></div>
<div style="left:1645px;top:873px;width:265px;height:26px;background:#fff"></div>
<div style="left:945px;top:872px;width:965px;height:1px;border-top:1px dashed #b4b4bb"></div>
<div class="t" style="left:946px;top:873px;width:70px;height:30px;line-height:30px;font-size:12.5px;letter-spacing:-0.3px;color:#77777d">2</div>
<div class="t" style="left:1016px;top:873px;width:70px;height:30px;line-height:30px;font-size:12.5px;letter-spacing:-0.3px;color:#77777d">2</div>
<svg class="ic" style="left:1084px;top:873px;fill:#a6d8b8;stroke:none" width="21" height="20" viewBox="0 0 21 20"><path d="M0 0h20.500L0 19.500z"/></svg>
<div class="t" style="left:1086px;top:873px;width:70px;height:30px;line-height:30px;font-size:12.5px;letter-spacing:-0.3px;color:#62bd7c">2</div>
<div class="t" style="left:1156px;top:873px;width:70px;height:30px;line-height:30px;font-size:12.5px;letter-spacing:-0.3px;color:#77777d">0</div>
<div class="t" style="left:1226px;top:873px;width:70px;height:30px;line-height:30px;font-size:12.5px;letter-spacing:-0.3px;color:#77777d">25 770</div>
<div class="t" style="left:1296px;top:873px;width:70px;height:30px;line-height:30px;font-size:12.5px;letter-spacing:-0.3px;color:#77777d">2</div>
<div class="t" style="left:1366px;top:873px;width:70px;height:30px;line-height:30px;font-size:12.5px;letter-spacing:-0.3px;color:#77777d">2</div>
<svg class="ic" style="left:1434px;top:873px;fill:#a6d8b8;stroke:none" width="21" height="20" viewBox="0 0 21 20"><path d="M0 0h20.500L0 19.500z"/></svg>
<div class="t" style="left:1436px;top:873px;width:70px;height:30px;line-height:30px;font-size:12.5px;letter-spacing:-0.3px;color:#62bd7c">2</div>
<div class="t" style="left:1506px;top:873px;width:70px;height:30px;line-height:30px;font-size:12.5px;letter-spacing:-0.3px;color:#77777d">0</div>
<div class="t" style="left:1576px;top:873px;width:70px;height:30px;line-height:30px;font-size:12.5px;letter-spacing:-0.3px;color:#77777d">25 770</div>
<div class="t" style="left:1855px;top:873px;width:70px;height:30px;line-height:30px;font-size:12.5px;color:#8a8a90">0</div>
<div style="left:1013px;top:607px;width:1px;height:291px;border-left:1px dashed #b4b4bb"></div>
<div style="left:1083px;top:607px;width:1px;height:291px;border-left:1px dashed #b4b4bb"></div>
<div style="left:1153px;top:607px;width:1px;height:291px;border-left:1px dashed #b4b4bb"></div>
<div style="left:1223px;top:607px;width:1px;height:291px;border-left:1px dashed #b4b4bb"></div>
<div style="left:1294px;top:582px;width:1px;height:316px;background:#bcbcc4"></div>
<div style="left:1363px;top:607px;width:1px;height:291px;border-left:1px dashed #b4b4bb"></div>
<div style="left:1433px;top:607px;width:1px;height:291px;border-left:1px dashed #b4b4bb"></div>
<div style="left:1503px;top:607px;width:1px;height:291px;border-left:1px dashed #b4b4bb"></div>
<div style="left:1573px;top:607px;width:1px;height:291px;border-left:1px dashed #b4b4bb"></div>
<div style="left:1644px;top:582px;width:1px;height:316px;background:#bcbcc4"></div>
<div style="left:1713px;top:607px;width:1px;height:291px;border-left:1px dashed #b4b4bb"></div>
<div style="left:1783px;top:607px;width:1px;height:291px;border-left:1px dashed #b4b4bb"></div>
<div style="left:1853px;top:607px;width:1px;height:291px;border-left:1px dashed #b4b4bb"></div>
<div style="left:1910px;top:582px;width:8px;height:329px;background:#f0f0f2"></div>
<div style="left:1912px;top:640px;width:6px;height:208px;background:#d9d9dd;border-radius:3px"></div>
<div style="left:945px;top:898px;width:973px;height:13px;background:#f0f0f2"></div>
<div style="left:1055px;top:899px;width:20px;height:11px;background:#d9d9dd;border-radius:6px"></div>
<div style="left:194px;top:584px;width:147px;height:238px;background:#fff;border-radius:5px;box-shadow:0 2px 6px rgba(0,0,0,.28);overflow:hidden"><div style="left:0;top:0;width:148px;height:43px;background:#f0f0f2"></div><div class="l" style="left:16px;top:9px;width:80px;height:26px;line-height:26px;font-size:17px;color:#333;letter-spacing:0.3px">Виды</div><div class="l" style="left:16px;top:54px;width:130px;height:24px;line-height:24px;font-size:14.5px;color:#333;letter-spacing:0.3px">По умолчанию</div><div style="left:0;top:91px;width:148px;height:48px;background:#dde9f7"></div><div class="l" style="left:16px;top:102px;width:120px;height:24px;line-height:24px;font-size:14.5px;color:#2f80d8;letter-spacing:0.3px">Прораб</div><div style="left:0;top:188px;width:148px;height:2px;background:#c9c9cf"></div><div class="l" style="left:56px;top:201px;width:90px;height:24px;line-height:24px;font-size:14.5px;color:#333;letter-spacing:0.3px">Настройки</div></div>
<svg class="ic" style="left:307.0px;top:593.0px;color:#444;" width="24" height="24" viewBox="0 0 24 24"><path d="M4 4l16 16M20 4L4 20" stroke-width="1.500"/></svg>
<svg class="ic" style="left:210.0px;top:786.0px;color:#46464f;" width="24" height="24" viewBox="0 0 24 24"><path d="M20.40 12.00 L20.44 11.45 L20.55 10.87 L20.76 10.26 L21.37 9.49 L21.91 8.64 L21.95 7.88 L21.82 7.16 L21.53 6.50 L21.10 5.92 L20.55 5.44 L19.87 5.10 L18.86 5.14 L17.89 5.28 L17.25 5.16 L16.70 4.97 L16.20 4.73 L15.74 4.42 L15.30 4.03 L14.87 3.54 L14.51 2.63 L14.04 1.73 L13.41 1.32 L12.72 1.08 L12.00 1.00 L11.28 1.08 L10.59 1.32 L9.96 1.73 L9.49 2.63 L9.13 3.54 L8.70 4.03 L8.26 4.42 L7.80 4.73 L7.30 4.97 L6.75 5.16 L6.11 5.28 L5.14 5.14 L4.13 5.10 L3.45 5.44 L2.90 5.92 L2.47 6.50 L2.18 7.16 L2.05 7.88 L2.09 8.64 L2.63 9.49 L3.24 10.26 L3.45 10.87 L3.56 11.45 L3.60 12.00 L3.56 12.55 L3.45 13.13 L3.24 13.74 L2.63 14.51 L2.09 15.36 L2.05 16.12 L2.18 16.84 L2.47 17.50 L2.90 18.08 L3.45 18.56 L4.13 18.90 L5.14 18.86 L6.11 18.72 L6.75 18.84 L7.30 19.03 L7.80 19.27 L8.26 19.58 L8.70 19.97 L9.13 20.46 L9.49 21.37 L9.96 22.27 L10.59 22.68 L11.28 22.92 L12.00 23.00 L12.72 22.92 L13.41 22.68 L14.04 22.27 L14.51 21.37 L14.87 20.46 L15.30 19.97 L15.74 19.58 L16.20 19.27 L16.70 19.03 L17.25 18.84 L17.89 18.72 L18.86 18.86 L19.87 18.90 L20.55 18.56 L21.10 18.08 L21.53 17.50 L21.82 16.84 L21.95 16.12 L21.91 15.36 L21.37 14.51 L20.76 13.74 L20.55 13.13 L20.44 12.55z" stroke-width="2"/><circle cx="12" cy="12" r="3.900" stroke-width="2"/></svg>
<svg class="ic" style="left:229px;top:540px;stroke:none" width="106" height="40" viewBox="0 0 106 40" ><path d="M2 20l11.500-5.500v11z" fill="#000"/><rect x="12" y="18.700" width="56" height="3.300" fill="#000"/><ellipse cx="84.5" cy="20.300" rx="15.600" ry="17" fill="#fff" stroke="#000" stroke-width="3.200"/><text x="84.5" y="27.500" text-anchor="middle" font-family="Liberation Sans, sans-serif" font-size="20" fill="#000" stroke="none">1</text></svg>
<svg class="ic" style="left:314px;top:677px;stroke:none" width="106" height="40" viewBox="0 0 106 40" ><path d="M2 20l11.500-5.500v11z" fill="#000"/><rect x="12" y="18.700" width="56" height="3.300" fill="#000"/><ellipse cx="84.5" cy="20.300" rx="15.600" ry="17" fill="#fff" stroke="#000" stroke-width="3.200"/><text x="84.5" y="27.500" text-anchor="middle" font-family="Liberation Sans, sans-serif" font-size="20" fill="#000" stroke="none">2</text></svg>
<svg class="ic" style="left:328px;top:779px;stroke:none" width="106" height="40" viewBox="0 0 106 40" ><path d="M2 20l11.500-5.500v11z" fill="#000"/><rect x="12" y="18.700" width="56" height="3.300" fill="#000"/><ellipse cx="84.5" cy="20.300" rx="15.600" ry="17" fill="#fff" stroke="#000" stroke-width="3.200"/><text x="84.5" y="27.500" text-anchor="middle" font-family="Liberation Sans, sans-serif" font-size="20" fill="#000" stroke="none">3</text></svg>
</body></html>
